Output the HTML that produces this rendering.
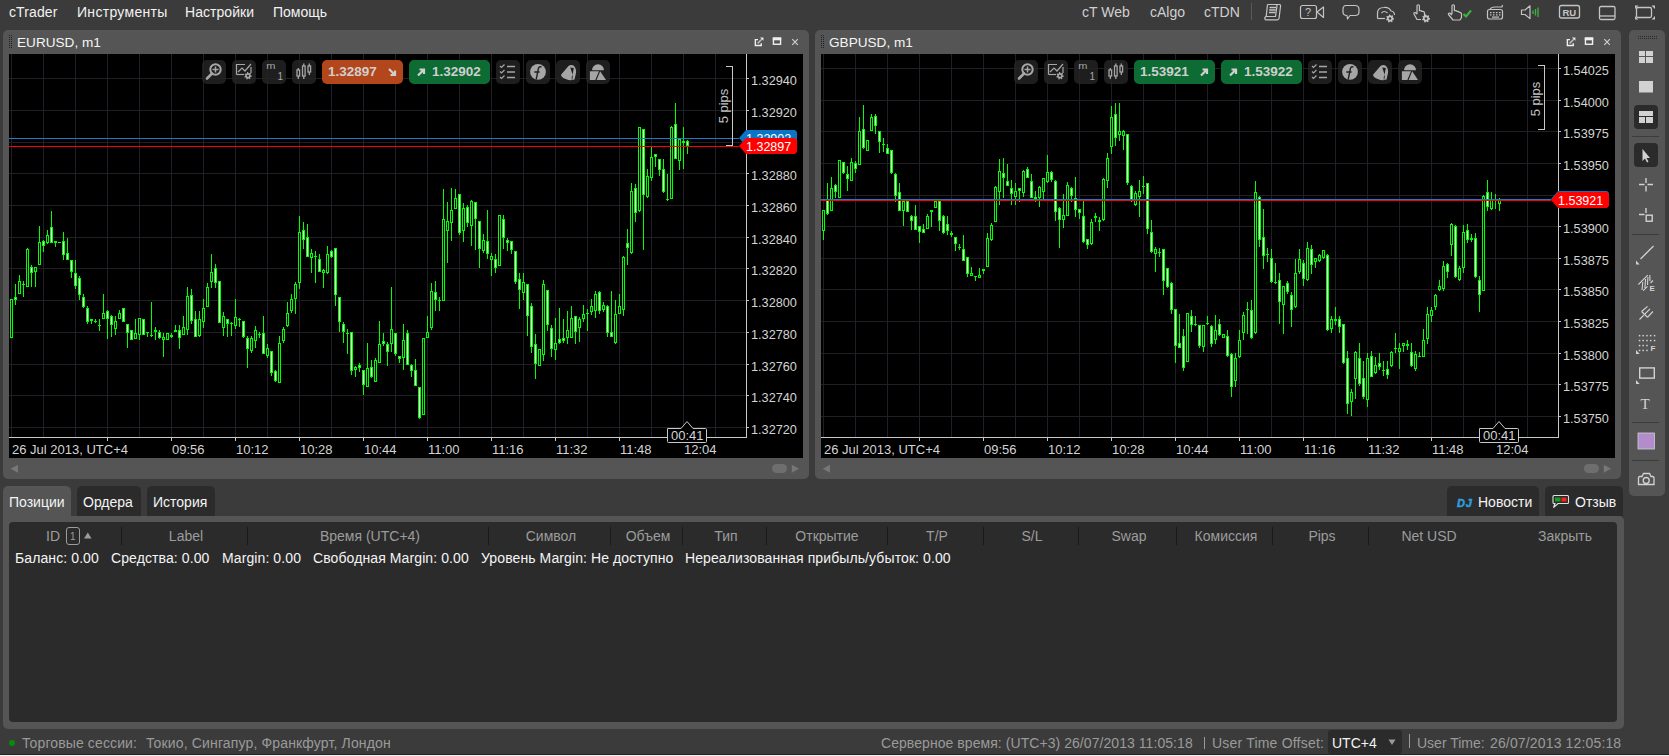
<!DOCTYPE html><html><head><meta charset="utf-8"><style>
*{margin:0;padding:0;box-sizing:border-box}
html,body{width:1669px;height:756px;overflow:hidden;background:#3b3b3b;font-family:"Liberation Sans",sans-serif}
.a{position:absolute}
.t{position:absolute;white-space:nowrap}
svg{position:absolute;overflow:visible}
</style></head><body>

<div class="a" style="left:0;top:754px;width:1669px;height:1px;background:#262626"></div>
<div class="a" style="left:0;top:755px;width:1669px;height:1px;background:#f0f0f0"></div>
<div class="t" style="left:9px;top:5.0px;font-size:14px;line-height:14px;color:#f2f2f2;letter-spacing:0.1px">cTrader</div>
<div class="t" style="left:77px;top:5.0px;font-size:14px;line-height:14px;color:#f2f2f2;letter-spacing:0.3px">Инструменты</div>
<div class="t" style="left:185px;top:5.0px;font-size:14px;line-height:14px;color:#f2f2f2;letter-spacing:0.05px">Настройки</div>
<div class="t" style="left:273px;top:5.0px;font-size:14px;line-height:14px;color:#f2f2f2;letter-spacing:0px">Помощь</div>
<div class="t" style="left:1082px;top:5.0px;font-size:14px;line-height:14px;color:#d0d0d0;">cT Web</div>
<div class="t" style="left:1150px;top:5.0px;font-size:14px;line-height:14px;color:#d0d0d0;">cAlgo</div>
<div class="t" style="left:1204px;top:5.0px;font-size:14px;line-height:14px;color:#d0d0d0;">cTDN</div>
<div class="a" style="left:1251px;top:3px;width:1px;height:17px;background:#5a5a5a"></div>
<div class="a" style="left:3px;top:30px;width:806px;height:449px;background:#555;border-radius:5px"></div>
<svg class="a" style="left:9px;top:35px" width="6" height="14"><rect x="0" y="0" width="1" height="1" fill="#222"/><rect x="0" y="2" width="1" height="1" fill="#222"/><rect x="0" y="4" width="1" height="1" fill="#222"/><rect x="0" y="6" width="1" height="1" fill="#222"/><rect x="0" y="8" width="1" height="1" fill="#222"/><rect x="0" y="10" width="1" height="1" fill="#222"/><rect x="0" y="12" width="1" height="1" fill="#222"/><rect x="2" y="0" width="1" height="1" fill="#222"/><rect x="2" y="2" width="1" height="1" fill="#222"/><rect x="2" y="4" width="1" height="1" fill="#222"/><rect x="2" y="6" width="1" height="1" fill="#222"/><rect x="2" y="8" width="1" height="1" fill="#222"/><rect x="2" y="10" width="1" height="1" fill="#222"/><rect x="2" y="12" width="1" height="1" fill="#222"/></svg>
<div class="t" style="left:17px;top:35.7px;font-size:13.6px;line-height:13.6px;color:#f4f4f4;">EURUSD, m1</div>
<svg class="a" style="left:750px;top:35px" width="56" height="14">
<g fill="none" stroke="#f0f0f0" stroke-width="1.4">
<path d="M8 4.65 H5.35 V10.45 H11.25 V8.2"/><rect x="23.45" y="3.15" width="7.1" height="6.1"/></g>
<path d="M7.6 8.4 L11.8 4.2" stroke="#bdbdbd" stroke-width="1.5"/>
<path d="M10 2.4 H13.4 V5.8 Z" fill="#f0f0f0"/>
<rect x="22.8" y="2.5" width="8.4" height="2.8" fill="#f0f0f0"/>
<path d="M42.3 4.2 L47.8 9.8 M47.8 4.2 L42.3 9.8" stroke="#cfcfcf" stroke-width="1.2"/>
</svg>
<div class="a" style="left:815px;top:30px;width:806px;height:449px;background:#555;border-radius:5px"></div>
<svg class="a" style="left:821px;top:35px" width="6" height="14"><rect x="0" y="0" width="1" height="1" fill="#222"/><rect x="0" y="2" width="1" height="1" fill="#222"/><rect x="0" y="4" width="1" height="1" fill="#222"/><rect x="0" y="6" width="1" height="1" fill="#222"/><rect x="0" y="8" width="1" height="1" fill="#222"/><rect x="0" y="10" width="1" height="1" fill="#222"/><rect x="0" y="12" width="1" height="1" fill="#222"/><rect x="2" y="0" width="1" height="1" fill="#222"/><rect x="2" y="2" width="1" height="1" fill="#222"/><rect x="2" y="4" width="1" height="1" fill="#222"/><rect x="2" y="6" width="1" height="1" fill="#222"/><rect x="2" y="8" width="1" height="1" fill="#222"/><rect x="2" y="10" width="1" height="1" fill="#222"/><rect x="2" y="12" width="1" height="1" fill="#222"/></svg>
<div class="t" style="left:829px;top:35.7px;font-size:13.6px;line-height:13.6px;color:#f4f4f4;">GBPUSD, m1</div>
<svg class="a" style="left:1562px;top:35px" width="56" height="14">
<g fill="none" stroke="#f0f0f0" stroke-width="1.4">
<path d="M8 4.65 H5.35 V10.45 H11.25 V8.2"/><rect x="23.45" y="3.15" width="7.1" height="6.1"/></g>
<path d="M7.6 8.4 L11.8 4.2" stroke="#bdbdbd" stroke-width="1.5"/>
<path d="M10 2.4 H13.4 V5.8 Z" fill="#f0f0f0"/>
<rect x="22.8" y="2.5" width="8.4" height="2.8" fill="#f0f0f0"/>
<path d="M42.3 4.2 L47.8 9.8 M47.8 4.2 L42.3 9.8" stroke="#cfcfcf" stroke-width="1.2"/>
</svg>
<div class="a" style="left:9px;top:54px;width:794px;height:404px;background:#000"></div>
<svg class="a" style="left:0;top:0" width="1669" height="756" shape-rendering="crispEdges"><rect x="11" y="54" width="1" height="383" fill="#201f25"/><rect x="43" y="54" width="1" height="383" fill="#201f25"/><rect x="75" y="54" width="1" height="383" fill="#201f25"/><rect x="107" y="54" width="1" height="383" fill="#201f25"/><rect x="139" y="54" width="1" height="383" fill="#201f25"/><rect x="171" y="54" width="1" height="383" fill="#201f25"/><rect x="203" y="54" width="1" height="383" fill="#201f25"/><rect x="235" y="54" width="1" height="383" fill="#201f25"/><rect x="267" y="54" width="1" height="383" fill="#201f25"/><rect x="299" y="54" width="1" height="383" fill="#201f25"/><rect x="331" y="54" width="1" height="383" fill="#201f25"/><rect x="363" y="54" width="1" height="383" fill="#201f25"/><rect x="395" y="54" width="1" height="383" fill="#201f25"/><rect x="427" y="54" width="1" height="383" fill="#201f25"/><rect x="459" y="54" width="1" height="383" fill="#201f25"/><rect x="491" y="54" width="1" height="383" fill="#201f25"/><rect x="523" y="54" width="1" height="383" fill="#201f25"/><rect x="555" y="54" width="1" height="383" fill="#201f25"/><rect x="587" y="54" width="1" height="383" fill="#201f25"/><rect x="619" y="54" width="1" height="383" fill="#201f25"/><rect x="651" y="54" width="1" height="383" fill="#201f25"/><rect x="683" y="54" width="1" height="383" fill="#201f25"/><rect x="715" y="54" width="1" height="383" fill="#201f25"/><rect x="9" y="78" width="737" height="1" fill="#201f25"/><rect x="9" y="110" width="737" height="1" fill="#201f25"/><rect x="9" y="142" width="737" height="1" fill="#201f25"/><rect x="9" y="173" width="737" height="1" fill="#201f25"/><rect x="9" y="205" width="737" height="1" fill="#201f25"/><rect x="9" y="237" width="737" height="1" fill="#201f25"/><rect x="9" y="268" width="737" height="1" fill="#201f25"/><rect x="9" y="300" width="737" height="1" fill="#201f25"/><rect x="9" y="332" width="737" height="1" fill="#201f25"/><rect x="9" y="364" width="737" height="1" fill="#201f25"/><rect x="9" y="395" width="737" height="1" fill="#201f25"/><rect x="9" y="427" width="737" height="1" fill="#201f25"/><rect x="746" y="54" width="1" height="384" fill="#c8c8c8"/><rect x="9" y="437" width="737" height="1" fill="#c8c8c8"/><rect x="746" y="78" width="3" height="1" fill="#c8c8c8"/><rect x="746" y="110" width="3" height="1" fill="#c8c8c8"/><rect x="746" y="142" width="3" height="1" fill="#c8c8c8"/><rect x="746" y="173" width="3" height="1" fill="#c8c8c8"/><rect x="746" y="205" width="3" height="1" fill="#c8c8c8"/><rect x="746" y="237" width="3" height="1" fill="#c8c8c8"/><rect x="746" y="268" width="3" height="1" fill="#c8c8c8"/><rect x="746" y="300" width="3" height="1" fill="#c8c8c8"/><rect x="746" y="332" width="3" height="1" fill="#c8c8c8"/><rect x="746" y="364" width="3" height="1" fill="#c8c8c8"/><rect x="746" y="395" width="3" height="1" fill="#c8c8c8"/><rect x="746" y="427" width="3" height="1" fill="#c8c8c8"/><rect x="107" y="437" width="1" height="4" fill="#c8c8c8"/><rect x="171" y="437" width="1" height="4" fill="#c8c8c8"/><rect x="235" y="437" width="1" height="4" fill="#c8c8c8"/><rect x="299" y="437" width="1" height="4" fill="#c8c8c8"/><rect x="363" y="437" width="1" height="4" fill="#c8c8c8"/><rect x="427" y="437" width="1" height="4" fill="#c8c8c8"/><rect x="491" y="437" width="1" height="4" fill="#c8c8c8"/><rect x="555" y="437" width="1" height="4" fill="#c8c8c8"/><rect x="619" y="437" width="1" height="4" fill="#c8c8c8"/><rect x="683" y="437" width="1" height="4" fill="#c8c8c8"/><rect x="11" y="299" width="1" height="39" fill="#00ff00"/>
<rect x="10" y="299" width="3" height="39" fill="#00ff00"/>
<rect x="11" y="300" width="1" height="37" fill="#000"/>
<rect x="15" y="284" width="1" height="21" fill="#00ff00"/>
<rect x="14" y="297" width="3" height="3" fill="#00ff00"/>
<rect x="15" y="298" width="1" height="1" fill="#e8ffe0"/>
<rect x="19" y="275" width="1" height="19" fill="#00ff00"/>
<rect x="18" y="281" width="3" height="13" fill="#00ff00"/>
<rect x="19" y="282" width="1" height="11" fill="#000"/>
<rect x="23" y="281" width="1" height="16" fill="#00ff00"/>
<rect x="22" y="284" width="3" height="1" fill="#00ff00"/>
<rect x="27" y="248" width="1" height="39" fill="#00ff00"/>
<rect x="26" y="249" width="3" height="38" fill="#00ff00"/>
<rect x="27" y="250" width="1" height="36" fill="#000"/>
<rect x="31" y="265" width="1" height="22" fill="#00ff00"/>
<rect x="30" y="267" width="3" height="6" fill="#00ff00"/>
<rect x="31" y="268" width="1" height="4" fill="#e8ffe0"/>
<rect x="35" y="267" width="1" height="20" fill="#00ff00"/>
<rect x="34" y="267" width="3" height="5" fill="#00ff00"/>
<rect x="35" y="268" width="1" height="3" fill="#000"/>
<rect x="39" y="226" width="1" height="39" fill="#00ff00"/>
<rect x="38" y="242" width="3" height="23" fill="#00ff00"/>
<rect x="39" y="243" width="1" height="21" fill="#000"/>
<rect x="43" y="240" width="1" height="12" fill="#00ff00"/>
<rect x="42" y="241" width="3" height="5" fill="#00ff00"/>
<rect x="43" y="242" width="1" height="3" fill="#e8ffe0"/>
<rect x="47" y="230" width="1" height="14" fill="#00ff00"/>
<rect x="46" y="235" width="3" height="8" fill="#00ff00"/>
<rect x="47" y="236" width="1" height="6" fill="#000"/>
<rect x="51" y="211" width="1" height="32" fill="#00ff00"/>
<rect x="50" y="227" width="3" height="16" fill="#00ff00"/>
<rect x="51" y="228" width="1" height="14" fill="#e8ffe0"/>
<rect x="55" y="241" width="1" height="6" fill="#00ff00"/>
<rect x="54" y="241" width="3" height="2" fill="#00ff00"/>
<rect x="59" y="242" width="1" height="1" fill="#00ff00"/>
<rect x="58" y="242" width="3" height="1" fill="#00ff00"/>
<rect x="63" y="232" width="1" height="28" fill="#00ff00"/>
<rect x="62" y="241" width="3" height="14" fill="#00ff00"/>
<rect x="63" y="242" width="1" height="12" fill="#e8ffe0"/>
<rect x="67" y="238" width="1" height="22" fill="#00ff00"/>
<rect x="66" y="253" width="3" height="7" fill="#00ff00"/>
<rect x="67" y="254" width="1" height="5" fill="#e8ffe0"/>
<rect x="71" y="260" width="1" height="18" fill="#00ff00"/>
<rect x="70" y="260" width="3" height="12" fill="#00ff00"/>
<rect x="71" y="261" width="1" height="10" fill="#e8ffe0"/>
<rect x="75" y="260" width="1" height="29" fill="#00ff00"/>
<rect x="74" y="273" width="3" height="13" fill="#00ff00"/>
<rect x="75" y="274" width="1" height="11" fill="#e8ffe0"/>
<rect x="79" y="276" width="1" height="24" fill="#00ff00"/>
<rect x="78" y="278" width="3" height="17" fill="#00ff00"/>
<rect x="79" y="279" width="1" height="15" fill="#e8ffe0"/>
<rect x="83" y="294" width="1" height="14" fill="#00ff00"/>
<rect x="82" y="297" width="3" height="10" fill="#00ff00"/>
<rect x="83" y="298" width="1" height="8" fill="#e8ffe0"/>
<rect x="87" y="306" width="1" height="18" fill="#00ff00"/>
<rect x="86" y="308" width="3" height="14" fill="#00ff00"/>
<rect x="87" y="309" width="1" height="12" fill="#e8ffe0"/>
<rect x="91" y="319" width="1" height="5" fill="#00ff00"/>
<rect x="90" y="319" width="3" height="2" fill="#00ff00"/>
<rect x="95" y="319" width="1" height="4" fill="#00ff00"/>
<rect x="94" y="321" width="3" height="1" fill="#00ff00"/>
<rect x="99" y="319" width="1" height="12" fill="#00ff00"/>
<rect x="98" y="325" width="3" height="1" fill="#00ff00"/>
<rect x="103" y="294" width="1" height="25" fill="#00ff00"/>
<rect x="102" y="313" width="3" height="6" fill="#00ff00"/>
<rect x="103" y="314" width="1" height="4" fill="#000"/>
<rect x="107" y="310" width="1" height="29" fill="#00ff00"/>
<rect x="106" y="311" width="3" height="8" fill="#00ff00"/>
<rect x="107" y="312" width="1" height="6" fill="#e8ffe0"/>
<rect x="111" y="315" width="1" height="22" fill="#00ff00"/>
<rect x="110" y="316" width="3" height="9" fill="#00ff00"/>
<rect x="111" y="317" width="1" height="7" fill="#e8ffe0"/>
<rect x="115" y="316" width="1" height="19" fill="#00ff00"/>
<rect x="114" y="321" width="3" height="8" fill="#00ff00"/>
<rect x="115" y="322" width="1" height="6" fill="#000"/>
<rect x="119" y="310" width="1" height="9" fill="#00ff00"/>
<rect x="118" y="313" width="3" height="6" fill="#00ff00"/>
<rect x="119" y="314" width="1" height="4" fill="#000"/>
<rect x="123" y="308" width="1" height="14" fill="#00ff00"/>
<rect x="122" y="308" width="3" height="14" fill="#00ff00"/>
<rect x="123" y="309" width="1" height="12" fill="#e8ffe0"/>
<rect x="127" y="324" width="1" height="24" fill="#00ff00"/>
<rect x="126" y="324" width="3" height="9" fill="#00ff00"/>
<rect x="127" y="325" width="1" height="7" fill="#e8ffe0"/>
<rect x="131" y="330" width="1" height="10" fill="#00ff00"/>
<rect x="130" y="330" width="3" height="10" fill="#00ff00"/>
<rect x="131" y="331" width="1" height="8" fill="#e8ffe0"/>
<rect x="135" y="319" width="1" height="20" fill="#00ff00"/>
<rect x="134" y="333" width="3" height="6" fill="#00ff00"/>
<rect x="135" y="334" width="1" height="4" fill="#000"/>
<rect x="139" y="318" width="1" height="22" fill="#00ff00"/>
<rect x="138" y="318" width="3" height="17" fill="#00ff00"/>
<rect x="139" y="319" width="1" height="15" fill="#000"/>
<rect x="143" y="319" width="1" height="16" fill="#00ff00"/>
<rect x="142" y="319" width="3" height="16" fill="#00ff00"/>
<rect x="143" y="320" width="1" height="14" fill="#e8ffe0"/>
<rect x="147" y="332" width="1" height="5" fill="#00ff00"/>
<rect x="146" y="332" width="3" height="1" fill="#00ff00"/>
<rect x="151" y="302" width="1" height="35" fill="#00ff00"/>
<rect x="150" y="335" width="3" height="1" fill="#00ff00"/>
<rect x="155" y="327" width="1" height="13" fill="#00ff00"/>
<rect x="154" y="330" width="3" height="2" fill="#00ff00"/>
<rect x="159" y="330" width="1" height="9" fill="#00ff00"/>
<rect x="158" y="332" width="3" height="6" fill="#00ff00"/>
<rect x="159" y="333" width="1" height="4" fill="#e8ffe0"/>
<rect x="163" y="333" width="1" height="24" fill="#00ff00"/>
<rect x="162" y="337" width="3" height="3" fill="#00ff00"/>
<rect x="163" y="338" width="1" height="1" fill="#000"/>
<rect x="167" y="333" width="1" height="7" fill="#00ff00"/>
<rect x="166" y="333" width="3" height="7" fill="#00ff00"/>
<rect x="167" y="334" width="1" height="5" fill="#000"/>
<rect x="171" y="333" width="1" height="5" fill="#00ff00"/>
<rect x="170" y="335" width="3" height="2" fill="#00ff00"/>
<rect x="175" y="325" width="1" height="7" fill="#00ff00"/>
<rect x="174" y="330" width="3" height="2" fill="#00ff00"/>
<rect x="179" y="325" width="1" height="24" fill="#00ff00"/>
<rect x="178" y="330" width="3" height="8" fill="#00ff00"/>
<rect x="179" y="331" width="1" height="6" fill="#e8ffe0"/>
<rect x="183" y="316" width="1" height="19" fill="#00ff00"/>
<rect x="182" y="327" width="3" height="8" fill="#00ff00"/>
<rect x="183" y="328" width="1" height="6" fill="#000"/>
<rect x="187" y="287" width="1" height="48" fill="#00ff00"/>
<rect x="186" y="296" width="3" height="34" fill="#00ff00"/>
<rect x="187" y="297" width="1" height="32" fill="#000"/>
<rect x="191" y="289" width="1" height="35" fill="#00ff00"/>
<rect x="190" y="295" width="3" height="26" fill="#00ff00"/>
<rect x="191" y="296" width="1" height="24" fill="#e8ffe0"/>
<rect x="195" y="311" width="1" height="26" fill="#00ff00"/>
<rect x="194" y="319" width="3" height="18" fill="#00ff00"/>
<rect x="195" y="320" width="1" height="16" fill="#e8ffe0"/>
<rect x="199" y="311" width="1" height="26" fill="#00ff00"/>
<rect x="198" y="319" width="3" height="17" fill="#00ff00"/>
<rect x="199" y="320" width="1" height="15" fill="#000"/>
<rect x="203" y="299" width="1" height="29" fill="#00ff00"/>
<rect x="202" y="308" width="3" height="14" fill="#00ff00"/>
<rect x="203" y="309" width="1" height="12" fill="#000"/>
<rect x="207" y="283" width="1" height="24" fill="#00ff00"/>
<rect x="206" y="287" width="3" height="20" fill="#00ff00"/>
<rect x="207" y="288" width="1" height="18" fill="#000"/>
<rect x="211" y="254" width="1" height="34" fill="#00ff00"/>
<rect x="210" y="272" width="3" height="10" fill="#00ff00"/>
<rect x="211" y="273" width="1" height="8" fill="#000"/>
<rect x="215" y="264" width="1" height="24" fill="#00ff00"/>
<rect x="214" y="268" width="3" height="15" fill="#00ff00"/>
<rect x="215" y="269" width="1" height="13" fill="#e8ffe0"/>
<rect x="219" y="281" width="1" height="42" fill="#00ff00"/>
<rect x="218" y="281" width="3" height="42" fill="#00ff00"/>
<rect x="219" y="282" width="1" height="40" fill="#e8ffe0"/>
<rect x="223" y="312" width="1" height="24" fill="#00ff00"/>
<rect x="222" y="316" width="3" height="12" fill="#00ff00"/>
<rect x="223" y="317" width="1" height="10" fill="#000"/>
<rect x="227" y="319" width="1" height="18" fill="#00ff00"/>
<rect x="226" y="319" width="3" height="5" fill="#00ff00"/>
<rect x="227" y="320" width="1" height="3" fill="#e8ffe0"/>
<rect x="231" y="322" width="1" height="14" fill="#00ff00"/>
<rect x="230" y="323" width="3" height="1" fill="#00ff00"/>
<rect x="235" y="299" width="1" height="30" fill="#00ff00"/>
<rect x="234" y="317" width="3" height="9" fill="#00ff00"/>
<rect x="235" y="318" width="1" height="7" fill="#000"/>
<rect x="239" y="318" width="1" height="9" fill="#00ff00"/>
<rect x="238" y="319" width="3" height="1" fill="#00ff00"/>
<rect x="243" y="321" width="1" height="17" fill="#00ff00"/>
<rect x="242" y="321" width="3" height="16" fill="#00ff00"/>
<rect x="243" y="322" width="1" height="14" fill="#e8ffe0"/>
<rect x="247" y="336" width="1" height="32" fill="#00ff00"/>
<rect x="246" y="338" width="3" height="11" fill="#00ff00"/>
<rect x="247" y="339" width="1" height="9" fill="#e8ffe0"/>
<rect x="251" y="336" width="1" height="17" fill="#00ff00"/>
<rect x="250" y="338" width="3" height="13" fill="#00ff00"/>
<rect x="251" y="339" width="1" height="11" fill="#000"/>
<rect x="255" y="326" width="1" height="22" fill="#00ff00"/>
<rect x="254" y="330" width="3" height="11" fill="#00ff00"/>
<rect x="255" y="331" width="1" height="9" fill="#000"/>
<rect x="259" y="332" width="1" height="6" fill="#00ff00"/>
<rect x="258" y="334" width="3" height="1" fill="#00ff00"/>
<rect x="263" y="316" width="1" height="38" fill="#00ff00"/>
<rect x="262" y="333" width="3" height="21" fill="#00ff00"/>
<rect x="263" y="334" width="1" height="19" fill="#e8ffe0"/>
<rect x="267" y="344" width="1" height="14" fill="#00ff00"/>
<rect x="266" y="348" width="3" height="8" fill="#00ff00"/>
<rect x="267" y="349" width="1" height="6" fill="#000"/>
<rect x="271" y="351" width="1" height="25" fill="#00ff00"/>
<rect x="270" y="351" width="3" height="22" fill="#00ff00"/>
<rect x="271" y="352" width="1" height="20" fill="#e8ffe0"/>
<rect x="275" y="370" width="1" height="12" fill="#00ff00"/>
<rect x="274" y="371" width="3" height="10" fill="#00ff00"/>
<rect x="275" y="372" width="1" height="8" fill="#e8ffe0"/>
<rect x="279" y="336" width="1" height="47" fill="#00ff00"/>
<rect x="278" y="343" width="3" height="40" fill="#00ff00"/>
<rect x="279" y="344" width="1" height="38" fill="#000"/>
<rect x="283" y="327" width="1" height="16" fill="#00ff00"/>
<rect x="282" y="329" width="3" height="12" fill="#00ff00"/>
<rect x="283" y="330" width="1" height="10" fill="#000"/>
<rect x="287" y="302" width="1" height="25" fill="#00ff00"/>
<rect x="286" y="313" width="3" height="13" fill="#00ff00"/>
<rect x="287" y="314" width="1" height="11" fill="#000"/>
<rect x="291" y="294" width="1" height="19" fill="#00ff00"/>
<rect x="290" y="299" width="3" height="12" fill="#00ff00"/>
<rect x="291" y="300" width="1" height="10" fill="#000"/>
<rect x="295" y="282" width="1" height="32" fill="#00ff00"/>
<rect x="294" y="284" width="3" height="15" fill="#00ff00"/>
<rect x="295" y="285" width="1" height="13" fill="#000"/>
<rect x="299" y="216" width="1" height="73" fill="#00ff00"/>
<rect x="298" y="232" width="3" height="51" fill="#00ff00"/>
<rect x="299" y="233" width="1" height="49" fill="#000"/>
<rect x="303" y="222" width="1" height="27" fill="#00ff00"/>
<rect x="302" y="230" width="3" height="10" fill="#00ff00"/>
<rect x="303" y="231" width="1" height="8" fill="#e8ffe0"/>
<rect x="307" y="224" width="1" height="33" fill="#00ff00"/>
<rect x="306" y="237" width="3" height="20" fill="#00ff00"/>
<rect x="307" y="238" width="1" height="18" fill="#e8ffe0"/>
<rect x="311" y="249" width="1" height="24" fill="#00ff00"/>
<rect x="310" y="253" width="3" height="5" fill="#00ff00"/>
<rect x="311" y="254" width="1" height="3" fill="#000"/>
<rect x="315" y="251" width="1" height="32" fill="#00ff00"/>
<rect x="314" y="256" width="3" height="1" fill="#00ff00"/>
<rect x="319" y="254" width="1" height="18" fill="#00ff00"/>
<rect x="318" y="259" width="3" height="13" fill="#00ff00"/>
<rect x="319" y="260" width="1" height="11" fill="#e8ffe0"/>
<rect x="323" y="269" width="1" height="19" fill="#00ff00"/>
<rect x="322" y="270" width="3" height="3" fill="#00ff00"/>
<rect x="323" y="271" width="1" height="1" fill="#000"/>
<rect x="327" y="246" width="1" height="28" fill="#00ff00"/>
<rect x="326" y="254" width="3" height="19" fill="#00ff00"/>
<rect x="327" y="255" width="1" height="17" fill="#000"/>
<rect x="331" y="250" width="1" height="8" fill="#00ff00"/>
<rect x="330" y="251" width="3" height="6" fill="#00ff00"/>
<rect x="331" y="252" width="1" height="4" fill="#e8ffe0"/>
<rect x="335" y="248" width="1" height="58" fill="#00ff00"/>
<rect x="334" y="248" width="3" height="47" fill="#00ff00"/>
<rect x="335" y="249" width="1" height="45" fill="#e8ffe0"/>
<rect x="339" y="297" width="1" height="35" fill="#00ff00"/>
<rect x="338" y="297" width="3" height="25" fill="#00ff00"/>
<rect x="339" y="298" width="1" height="23" fill="#e8ffe0"/>
<rect x="343" y="322" width="1" height="21" fill="#00ff00"/>
<rect x="342" y="324" width="3" height="8" fill="#00ff00"/>
<rect x="343" y="325" width="1" height="6" fill="#e8ffe0"/>
<rect x="347" y="329" width="1" height="25" fill="#00ff00"/>
<rect x="346" y="333" width="3" height="1" fill="#00ff00"/>
<rect x="351" y="332" width="1" height="43" fill="#00ff00"/>
<rect x="350" y="332" width="3" height="39" fill="#00ff00"/>
<rect x="351" y="333" width="1" height="37" fill="#e8ffe0"/>
<rect x="355" y="366" width="1" height="11" fill="#00ff00"/>
<rect x="354" y="367" width="3" height="3" fill="#00ff00"/>
<rect x="355" y="368" width="1" height="1" fill="#000"/>
<rect x="359" y="363" width="1" height="9" fill="#00ff00"/>
<rect x="358" y="365" width="3" height="3" fill="#00ff00"/>
<rect x="359" y="366" width="1" height="1" fill="#e8ffe0"/>
<rect x="363" y="370" width="1" height="25" fill="#00ff00"/>
<rect x="362" y="370" width="3" height="15" fill="#00ff00"/>
<rect x="363" y="371" width="1" height="13" fill="#e8ffe0"/>
<rect x="367" y="343" width="1" height="44" fill="#00ff00"/>
<rect x="366" y="368" width="3" height="19" fill="#00ff00"/>
<rect x="367" y="369" width="1" height="17" fill="#000"/>
<rect x="371" y="360" width="1" height="18" fill="#00ff00"/>
<rect x="370" y="367" width="3" height="10" fill="#00ff00"/>
<rect x="371" y="368" width="1" height="8" fill="#e8ffe0"/>
<rect x="375" y="358" width="1" height="24" fill="#00ff00"/>
<rect x="374" y="360" width="3" height="22" fill="#00ff00"/>
<rect x="375" y="361" width="1" height="20" fill="#000"/>
<rect x="379" y="321" width="1" height="42" fill="#00ff00"/>
<rect x="378" y="344" width="3" height="19" fill="#00ff00"/>
<rect x="379" y="345" width="1" height="17" fill="#000"/>
<rect x="383" y="333" width="1" height="13" fill="#00ff00"/>
<rect x="382" y="341" width="3" height="3" fill="#00ff00"/>
<rect x="383" y="342" width="1" height="1" fill="#e8ffe0"/>
<rect x="387" y="342" width="1" height="24" fill="#00ff00"/>
<rect x="386" y="344" width="3" height="8" fill="#00ff00"/>
<rect x="387" y="345" width="1" height="6" fill="#e8ffe0"/>
<rect x="391" y="287" width="1" height="65" fill="#00ff00"/>
<rect x="390" y="329" width="3" height="15" fill="#00ff00"/>
<rect x="391" y="330" width="1" height="13" fill="#000"/>
<rect x="395" y="333" width="1" height="23" fill="#00ff00"/>
<rect x="394" y="333" width="3" height="21" fill="#00ff00"/>
<rect x="395" y="334" width="1" height="19" fill="#e8ffe0"/>
<rect x="399" y="356" width="1" height="7" fill="#00ff00"/>
<rect x="398" y="356" width="3" height="3" fill="#00ff00"/>
<rect x="399" y="357" width="1" height="1" fill="#e8ffe0"/>
<rect x="403" y="324" width="1" height="46" fill="#00ff00"/>
<rect x="402" y="340" width="3" height="18" fill="#00ff00"/>
<rect x="403" y="341" width="1" height="16" fill="#000"/>
<rect x="407" y="330" width="1" height="35" fill="#00ff00"/>
<rect x="406" y="333" width="3" height="32" fill="#00ff00"/>
<rect x="407" y="334" width="1" height="30" fill="#e8ffe0"/>
<rect x="411" y="364" width="1" height="13" fill="#00ff00"/>
<rect x="410" y="365" width="3" height="6" fill="#00ff00"/>
<rect x="411" y="366" width="1" height="4" fill="#e8ffe0"/>
<rect x="415" y="359" width="1" height="27" fill="#00ff00"/>
<rect x="414" y="370" width="3" height="16" fill="#00ff00"/>
<rect x="415" y="371" width="1" height="14" fill="#e8ffe0"/>
<rect x="419" y="387" width="1" height="32" fill="#00ff00"/>
<rect x="418" y="387" width="3" height="31" fill="#00ff00"/>
<rect x="419" y="388" width="1" height="29" fill="#e8ffe0"/>
<rect x="423" y="338" width="1" height="77" fill="#00ff00"/>
<rect x="422" y="338" width="3" height="77" fill="#00ff00"/>
<rect x="423" y="339" width="1" height="75" fill="#000"/>
<rect x="427" y="316" width="1" height="22" fill="#00ff00"/>
<rect x="426" y="332" width="3" height="6" fill="#00ff00"/>
<rect x="427" y="333" width="1" height="4" fill="#000"/>
<rect x="431" y="283" width="1" height="47" fill="#00ff00"/>
<rect x="430" y="291" width="3" height="37" fill="#00ff00"/>
<rect x="431" y="292" width="1" height="35" fill="#000"/>
<rect x="435" y="281" width="1" height="30" fill="#00ff00"/>
<rect x="434" y="292" width="3" height="8" fill="#00ff00"/>
<rect x="435" y="293" width="1" height="6" fill="#e8ffe0"/>
<rect x="439" y="297" width="1" height="14" fill="#00ff00"/>
<rect x="438" y="300" width="3" height="1" fill="#00ff00"/>
<rect x="443" y="189" width="1" height="112" fill="#00ff00"/>
<rect x="442" y="219" width="3" height="82" fill="#00ff00"/>
<rect x="443" y="220" width="1" height="80" fill="#000"/>
<rect x="447" y="202" width="1" height="61" fill="#00ff00"/>
<rect x="446" y="221" width="3" height="10" fill="#00ff00"/>
<rect x="447" y="222" width="1" height="8" fill="#000"/>
<rect x="451" y="188" width="1" height="53" fill="#00ff00"/>
<rect x="450" y="210" width="3" height="13" fill="#00ff00"/>
<rect x="451" y="211" width="1" height="11" fill="#000"/>
<rect x="455" y="189" width="1" height="20" fill="#00ff00"/>
<rect x="454" y="198" width="3" height="11" fill="#00ff00"/>
<rect x="455" y="199" width="1" height="9" fill="#000"/>
<rect x="459" y="194" width="1" height="41" fill="#00ff00"/>
<rect x="458" y="194" width="3" height="39" fill="#00ff00"/>
<rect x="459" y="195" width="1" height="37" fill="#e8ffe0"/>
<rect x="463" y="203" width="1" height="39" fill="#00ff00"/>
<rect x="462" y="208" width="3" height="23" fill="#00ff00"/>
<rect x="463" y="209" width="1" height="21" fill="#000"/>
<rect x="467" y="205" width="1" height="22" fill="#00ff00"/>
<rect x="466" y="207" width="3" height="16" fill="#00ff00"/>
<rect x="467" y="208" width="1" height="14" fill="#e8ffe0"/>
<rect x="471" y="200" width="1" height="46" fill="#00ff00"/>
<rect x="470" y="201" width="3" height="25" fill="#00ff00"/>
<rect x="471" y="202" width="1" height="23" fill="#000"/>
<rect x="475" y="202" width="1" height="48" fill="#00ff00"/>
<rect x="474" y="202" width="3" height="17" fill="#00ff00"/>
<rect x="475" y="203" width="1" height="15" fill="#e8ffe0"/>
<rect x="479" y="221" width="1" height="47" fill="#00ff00"/>
<rect x="478" y="221" width="3" height="28" fill="#00ff00"/>
<rect x="479" y="222" width="1" height="26" fill="#e8ffe0"/>
<rect x="483" y="234" width="1" height="19" fill="#00ff00"/>
<rect x="482" y="240" width="3" height="11" fill="#00ff00"/>
<rect x="483" y="241" width="1" height="9" fill="#000"/>
<rect x="487" y="210" width="1" height="49" fill="#00ff00"/>
<rect x="486" y="241" width="3" height="13" fill="#00ff00"/>
<rect x="487" y="242" width="1" height="11" fill="#e8ffe0"/>
<rect x="491" y="253" width="1" height="23" fill="#00ff00"/>
<rect x="490" y="256" width="3" height="4" fill="#00ff00"/>
<rect x="491" y="257" width="1" height="2" fill="#000"/>
<rect x="495" y="254" width="1" height="19" fill="#00ff00"/>
<rect x="494" y="259" width="3" height="9" fill="#00ff00"/>
<rect x="495" y="260" width="1" height="7" fill="#e8ffe0"/>
<rect x="499" y="215" width="1" height="51" fill="#00ff00"/>
<rect x="498" y="215" width="3" height="51" fill="#00ff00"/>
<rect x="499" y="216" width="1" height="49" fill="#000"/>
<rect x="503" y="215" width="1" height="34" fill="#00ff00"/>
<rect x="502" y="219" width="3" height="19" fill="#00ff00"/>
<rect x="503" y="220" width="1" height="17" fill="#e8ffe0"/>
<rect x="507" y="238" width="1" height="13" fill="#00ff00"/>
<rect x="506" y="240" width="3" height="3" fill="#00ff00"/>
<rect x="507" y="241" width="1" height="1" fill="#e8ffe0"/>
<rect x="511" y="241" width="1" height="13" fill="#00ff00"/>
<rect x="510" y="241" width="3" height="9" fill="#00ff00"/>
<rect x="511" y="242" width="1" height="7" fill="#e8ffe0"/>
<rect x="515" y="251" width="1" height="33" fill="#00ff00"/>
<rect x="514" y="251" width="3" height="31" fill="#00ff00"/>
<rect x="515" y="252" width="1" height="29" fill="#e8ffe0"/>
<rect x="519" y="273" width="1" height="36" fill="#00ff00"/>
<rect x="518" y="279" width="3" height="11" fill="#00ff00"/>
<rect x="519" y="280" width="1" height="9" fill="#e8ffe0"/>
<rect x="523" y="273" width="1" height="27" fill="#00ff00"/>
<rect x="522" y="282" width="3" height="11" fill="#00ff00"/>
<rect x="523" y="283" width="1" height="9" fill="#000"/>
<rect x="527" y="284" width="1" height="52" fill="#00ff00"/>
<rect x="526" y="284" width="3" height="32" fill="#00ff00"/>
<rect x="527" y="285" width="1" height="30" fill="#e8ffe0"/>
<rect x="531" y="303" width="1" height="50" fill="#00ff00"/>
<rect x="530" y="306" width="3" height="41" fill="#00ff00"/>
<rect x="531" y="307" width="1" height="39" fill="#e8ffe0"/>
<rect x="535" y="334" width="1" height="45" fill="#00ff00"/>
<rect x="534" y="344" width="3" height="20" fill="#00ff00"/>
<rect x="535" y="345" width="1" height="18" fill="#e8ffe0"/>
<rect x="539" y="349" width="1" height="17" fill="#00ff00"/>
<rect x="538" y="349" width="3" height="17" fill="#00ff00"/>
<rect x="539" y="350" width="1" height="15" fill="#000"/>
<rect x="543" y="280" width="1" height="81" fill="#00ff00"/>
<rect x="542" y="284" width="3" height="71" fill="#00ff00"/>
<rect x="543" y="285" width="1" height="69" fill="#000"/>
<rect x="547" y="290" width="1" height="41" fill="#00ff00"/>
<rect x="546" y="290" width="3" height="35" fill="#00ff00"/>
<rect x="547" y="291" width="1" height="33" fill="#e8ffe0"/>
<rect x="551" y="325" width="1" height="32" fill="#00ff00"/>
<rect x="550" y="328" width="3" height="21" fill="#00ff00"/>
<rect x="551" y="329" width="1" height="19" fill="#e8ffe0"/>
<rect x="555" y="318" width="1" height="42" fill="#00ff00"/>
<rect x="554" y="343" width="3" height="7" fill="#00ff00"/>
<rect x="555" y="344" width="1" height="5" fill="#000"/>
<rect x="559" y="308" width="1" height="36" fill="#00ff00"/>
<rect x="558" y="339" width="3" height="4" fill="#00ff00"/>
<rect x="559" y="340" width="1" height="2" fill="#e8ffe0"/>
<rect x="563" y="319" width="1" height="24" fill="#00ff00"/>
<rect x="562" y="338" width="3" height="3" fill="#00ff00"/>
<rect x="563" y="339" width="1" height="1" fill="#e8ffe0"/>
<rect x="567" y="311" width="1" height="33" fill="#00ff00"/>
<rect x="566" y="330" width="3" height="8" fill="#00ff00"/>
<rect x="567" y="331" width="1" height="6" fill="#000"/>
<rect x="571" y="306" width="1" height="32" fill="#00ff00"/>
<rect x="570" y="318" width="3" height="20" fill="#00ff00"/>
<rect x="571" y="319" width="1" height="18" fill="#000"/>
<rect x="575" y="316" width="1" height="28" fill="#00ff00"/>
<rect x="574" y="316" width="3" height="16" fill="#00ff00"/>
<rect x="575" y="317" width="1" height="14" fill="#e8ffe0"/>
<rect x="579" y="317" width="1" height="25" fill="#00ff00"/>
<rect x="578" y="319" width="3" height="9" fill="#00ff00"/>
<rect x="579" y="320" width="1" height="7" fill="#000"/>
<rect x="583" y="305" width="1" height="17" fill="#00ff00"/>
<rect x="582" y="314" width="3" height="5" fill="#00ff00"/>
<rect x="583" y="315" width="1" height="3" fill="#000"/>
<rect x="587" y="309" width="1" height="22" fill="#00ff00"/>
<rect x="586" y="313" width="3" height="1" fill="#00ff00"/>
<rect x="591" y="299" width="1" height="16" fill="#00ff00"/>
<rect x="590" y="306" width="3" height="6" fill="#00ff00"/>
<rect x="591" y="307" width="1" height="4" fill="#000"/>
<rect x="595" y="291" width="1" height="27" fill="#00ff00"/>
<rect x="594" y="294" width="3" height="17" fill="#00ff00"/>
<rect x="595" y="295" width="1" height="15" fill="#000"/>
<rect x="599" y="291" width="1" height="23" fill="#00ff00"/>
<rect x="598" y="292" width="3" height="19" fill="#00ff00"/>
<rect x="599" y="293" width="1" height="17" fill="#e8ffe0"/>
<rect x="603" y="302" width="1" height="10" fill="#00ff00"/>
<rect x="602" y="305" width="3" height="5" fill="#00ff00"/>
<rect x="603" y="306" width="1" height="3" fill="#000"/>
<rect x="607" y="305" width="1" height="32" fill="#00ff00"/>
<rect x="606" y="306" width="3" height="27" fill="#00ff00"/>
<rect x="607" y="307" width="1" height="25" fill="#e8ffe0"/>
<rect x="611" y="291" width="1" height="46" fill="#00ff00"/>
<rect x="610" y="332" width="3" height="5" fill="#00ff00"/>
<rect x="611" y="333" width="1" height="3" fill="#e8ffe0"/>
<rect x="615" y="300" width="1" height="44" fill="#00ff00"/>
<rect x="614" y="314" width="3" height="29" fill="#00ff00"/>
<rect x="615" y="315" width="1" height="27" fill="#000"/>
<rect x="619" y="294" width="1" height="20" fill="#00ff00"/>
<rect x="618" y="306" width="3" height="8" fill="#00ff00"/>
<rect x="619" y="307" width="1" height="6" fill="#000"/>
<rect x="623" y="256" width="1" height="60" fill="#00ff00"/>
<rect x="622" y="257" width="3" height="53" fill="#00ff00"/>
<rect x="623" y="258" width="1" height="51" fill="#000"/>
<rect x="627" y="229" width="1" height="36" fill="#00ff00"/>
<rect x="626" y="243" width="3" height="5" fill="#00ff00"/>
<rect x="627" y="244" width="1" height="3" fill="#e8ffe0"/>
<rect x="631" y="183" width="1" height="71" fill="#00ff00"/>
<rect x="630" y="191" width="3" height="62" fill="#00ff00"/>
<rect x="631" y="192" width="1" height="60" fill="#000"/>
<rect x="635" y="184" width="1" height="38" fill="#00ff00"/>
<rect x="634" y="188" width="3" height="25" fill="#00ff00"/>
<rect x="635" y="189" width="1" height="23" fill="#e8ffe0"/>
<rect x="639" y="127" width="1" height="85" fill="#00ff00"/>
<rect x="638" y="127" width="3" height="84" fill="#00ff00"/>
<rect x="639" y="128" width="1" height="82" fill="#000"/>
<rect x="643" y="129" width="1" height="121" fill="#00ff00"/>
<rect x="642" y="129" width="3" height="66" fill="#00ff00"/>
<rect x="643" y="130" width="1" height="64" fill="#e8ffe0"/>
<rect x="647" y="169" width="1" height="29" fill="#00ff00"/>
<rect x="646" y="176" width="3" height="21" fill="#00ff00"/>
<rect x="647" y="177" width="1" height="19" fill="#000"/>
<rect x="651" y="147" width="1" height="34" fill="#00ff00"/>
<rect x="650" y="157" width="3" height="21" fill="#00ff00"/>
<rect x="651" y="158" width="1" height="19" fill="#000"/>
<rect x="655" y="154" width="1" height="13" fill="#00ff00"/>
<rect x="654" y="154" width="3" height="3" fill="#00ff00"/>
<rect x="655" y="155" width="1" height="1" fill="#e8ffe0"/>
<rect x="659" y="159" width="1" height="17" fill="#00ff00"/>
<rect x="658" y="159" width="3" height="11" fill="#00ff00"/>
<rect x="659" y="160" width="1" height="9" fill="#e8ffe0"/>
<rect x="663" y="159" width="1" height="34" fill="#00ff00"/>
<rect x="662" y="169" width="3" height="23" fill="#00ff00"/>
<rect x="663" y="170" width="1" height="21" fill="#e8ffe0"/>
<rect x="667" y="174" width="1" height="27" fill="#00ff00"/>
<rect x="666" y="199" width="3" height="1" fill="#00ff00"/>
<rect x="671" y="126" width="1" height="73" fill="#00ff00"/>
<rect x="670" y="127" width="3" height="72" fill="#00ff00"/>
<rect x="671" y="128" width="1" height="70" fill="#000"/>
<rect x="675" y="103" width="1" height="56" fill="#00ff00"/>
<rect x="674" y="124" width="3" height="35" fill="#00ff00"/>
<rect x="675" y="125" width="1" height="33" fill="#e8ffe0"/>
<rect x="679" y="139" width="1" height="31" fill="#00ff00"/>
<rect x="678" y="139" width="3" height="22" fill="#00ff00"/>
<rect x="679" y="140" width="1" height="20" fill="#000"/>
<rect x="683" y="127" width="1" height="42" fill="#00ff00"/>
<rect x="682" y="141" width="3" height="2" fill="#00ff00"/>
<rect x="687" y="140" width="1" height="14" fill="#00ff00"/>
<rect x="686" y="141" width="3" height="5" fill="#00ff00"/>
<rect x="687" y="142" width="1" height="3" fill="#e8ffe0"/><rect x="9" y="138" width="730" height="1" fill="#1f7acc"/><rect x="9" y="146" width="730" height="1" fill="#ff0000"/><rect x="732" y="66" width="1" height="80" fill="#c8c8c8"/><rect x="726" y="66" width="6" height="1" fill="#c8c8c8"/><rect x="726" y="145" width="6" height="1" fill="#c8c8c8"/></svg>
<div class="t" style="left:751px;top:74.65px;font-size:12.7px;line-height:12.7px;color:#d4d4d4;">1.32940</div>
<div class="t" style="left:751px;top:106.65px;font-size:12.7px;line-height:12.7px;color:#d4d4d4;">1.32920</div>
<div class="t" style="left:751px;top:138.65px;font-size:12.7px;line-height:12.7px;color:#d4d4d4;">1.32900</div>
<div class="t" style="left:751px;top:169.65px;font-size:12.7px;line-height:12.7px;color:#d4d4d4;">1.32880</div>
<div class="t" style="left:751px;top:201.65px;font-size:12.7px;line-height:12.7px;color:#d4d4d4;">1.32860</div>
<div class="t" style="left:751px;top:233.65px;font-size:12.7px;line-height:12.7px;color:#d4d4d4;">1.32840</div>
<div class="t" style="left:751px;top:264.65px;font-size:12.7px;line-height:12.7px;color:#d4d4d4;">1.32820</div>
<div class="t" style="left:751px;top:296.65px;font-size:12.7px;line-height:12.7px;color:#d4d4d4;">1.32800</div>
<div class="t" style="left:751px;top:328.65px;font-size:12.7px;line-height:12.7px;color:#d4d4d4;">1.32780</div>
<div class="t" style="left:751px;top:360.65px;font-size:12.7px;line-height:12.7px;color:#d4d4d4;">1.32760</div>
<div class="t" style="left:751px;top:391.65px;font-size:12.7px;line-height:12.7px;color:#d4d4d4;">1.32740</div>
<div class="t" style="left:751px;top:423.65px;font-size:12.7px;line-height:12.7px;color:#d4d4d4;">1.32720</div>
<div class="t" style="left:12px;top:443.0px;font-size:13px;line-height:13px;color:#d4d4d4;">26 Jul 2013, UTC+4</div>
<div class="t" style="left:172px;top:443.0px;font-size:13px;line-height:13px;color:#d4d4d4;">09:56</div>
<div class="t" style="left:236px;top:443.0px;font-size:13px;line-height:13px;color:#d4d4d4;">10:12</div>
<div class="t" style="left:300px;top:443.0px;font-size:13px;line-height:13px;color:#d4d4d4;">10:28</div>
<div class="t" style="left:364px;top:443.0px;font-size:13px;line-height:13px;color:#d4d4d4;">10:44</div>
<div class="t" style="left:428px;top:443.0px;font-size:13px;line-height:13px;color:#d4d4d4;">11:00</div>
<div class="t" style="left:492px;top:443.0px;font-size:13px;line-height:13px;color:#d4d4d4;">11:16</div>
<div class="t" style="left:556px;top:443.0px;font-size:13px;line-height:13px;color:#d4d4d4;">11:32</div>
<div class="t" style="left:620px;top:443.0px;font-size:13px;line-height:13px;color:#d4d4d4;">11:48</div>
<div class="t" style="left:684px;top:443.0px;font-size:13px;line-height:13px;color:#d4d4d4;">12:04</div>
<div class="t" style="left:694px;top:99px;width:60px;height:14px;text-align:center;font-size:13px;line-height:14px;color:#c4c4c4;transform:rotate(-90deg)">5 pips</div>
<svg class="a" style="left:0;top:0" width="1669" height="756"><polygon points="739,138 746,130 795,130 797,132 797,144 795,146 746,146" fill="#0a74c6"/></svg><div class="t" style="left:746px;top:133.25px;font-size:12.5px;line-height:12.5px;color:#ffffff;">1.32902</div>
<svg class="a" style="left:0;top:0" width="1669" height="756"><polygon points="739,146 746,138 795,138 797,140 797,152 795,154 746,154" fill="#ff0000"/></svg><div class="t" style="left:746px;top:141.25px;font-size:12.5px;line-height:12.5px;color:#ffffff;">1.32897</div>
<svg class="a" style="left:0;top:0" width="1669" height="756"><path d="M667.5 428.5 H681 L687 421.5 L693 428.5 H705.5 Q706.5 428.5 706.5 429.5 V441.5 Q706.5 442.5 705.5 442.5 H668.5 Q667.5 442.5 667.5 441.5 Z" fill="#000" stroke="#c8c8c8" stroke-width="1"/></svg>
<div class="t" style="left:671px;top:429.0px;font-size:13px;line-height:13px;color:#d4d4d4;">00:41</div>
<svg class="a" style="left:0px;top:460px" width="809" height="18"><path d="M10.5 8.8 L18 4.8 V12.8 Z" fill="#777"/><rect x="772" y="4" width="15" height="9" rx="4.5" fill="#6e6e6e"/><path d="M799 8.8 L791.8 4.8 V12.8 Z" fill="#777"/></svg>
<div class="a" style="left:202px;top:60px;width:24px;height:24px;border-radius:5px;background:rgba(36,36,36,0.82)"><svg width="24" height="24" style="left:0;top:0"><g fill="none" stroke="#a6a6a6" stroke-width="2"><circle cx="13.5" cy="9.5" r="5.2"/><path d="M10 13.5 L5 18.5" stroke-width="2.6" stroke-linecap="round"/></g><path d="M13.5 6.5 v6 M10.5 9.5 h6" stroke="#a6a6a6" stroke-width="1.5"/></svg></div>
<div class="a" style="left:232px;top:60px;width:24px;height:24px;border-radius:5px;background:rgba(36,36,36,0.82)"><svg width="24" height="24" style="left:0;top:0"><g fill="none" stroke="#a6a6a6" stroke-width="1.2"><path d="M4.5 14.5 V4.5 H13"/><path d="M4.5 14.5 H12"/><path d="M6 12 L10 8 L13 11 L19 4"/><path d="M19 7 v6"/></g><polygon points="19.80,15.80 19.70,16.65 18.43,16.97 18.11,17.48 18.37,18.77 17.65,19.22 16.60,18.43 16.00,18.50 15.15,19.50 14.35,19.22 14.32,17.91 13.89,17.48 12.58,17.45 12.30,16.65 13.30,15.80 13.37,15.20 12.58,14.15 13.03,13.43 14.32,13.69 14.83,13.37 15.15,12.10 16.00,12.00 16.60,13.17 17.17,13.37 18.37,12.83 18.97,13.43 18.43,14.63 18.63,15.20" fill="#a6a6a6"/><circle cx="16" cy="15.8" r="1.1" fill="#262626"/></svg></div>
<div class="a" style="left:262px;top:60px;width:24px;height:24px;border-radius:5px;background:rgba(36,36,36,0.82)"><svg width="24" height="24" style="left:0;top:0"><text x="4" y="9.8" font-size="10.5" font-family="Liberation Sans" fill="#a6a6a6" transform="scale(1.05,0.95)">m</text><text x="15.5" y="20" font-size="10" font-family="Liberation Sans" fill="#a6a6a6">1</text></svg></div>
<div class="a" style="left:292px;top:60px;width:24px;height:24px;border-radius:5px;background:rgba(36,36,36,0.82)"><svg width="24" height="24" style="left:0;top:0"><g fill="none" stroke="#a6a6a6" stroke-width="1.3"><rect x="5" y="10" width="2.6" height="6"/><path d="M6.3 8 v2 M6.3 16 v3"/><rect x="10.5" y="6" width="2.6" height="10"/><path d="M11.8 3.5 v2.5 M11.8 16 v3"/><rect x="16" y="6" width="2.6" height="6"/><path d="M17.3 3.5 v2.5 M17.3 12 v3"/></g></svg></div>
<div class="a" style="left:322px;top:60px;width:81px;height:24px;border-radius:5px;background:#b4461c"><div class="t" style="left:6px;top:5px;font-size:13.5px;line-height:14px;font-weight:bold;color:#cfcfcf">1.32897</div><svg style="left:66px;top:8px" width="9" height="9"><path d="M1 1 L7 7 M7 2.5 V7 H2.5" fill="none" stroke="#d0d0d0" stroke-width="2.2"/></svg></div>
<div class="a" style="left:409px;top:60px;width:81px;height:24px;border-radius:5px;background:#0d6b34"><svg style="left:8px;top:8px" width="9" height="9"><path d="M1 7.5 L7 1.5 M2.5 1.5 H7 V6" fill="none" stroke="#d0d0d0" stroke-width="2.2"/></svg><div class="t" style="left:23px;top:5px;font-size:13.5px;line-height:14px;font-weight:bold;color:#cfcfcf">1.32902</div></div>
<div class="a" style="left:496px;top:60px;width:24px;height:24px;border-radius:5px;background:rgba(36,36,36,0.82)"><svg width="24" height="24" style="left:0;top:0"><g fill="none" stroke="#a6a6a6" stroke-width="1.2"><path d="M4 6 l1.5 1.5 l3 -3 M4 11.5 l1.5 1.5 l3 -3 M4 17 l1.5 1.5 l3 -3"/><path d="M11 6.5 h8 M11 12 h8 M11 17.5 h8" stroke-width="1.6"/></g></svg></div>
<div class="a" style="left:526px;top:60px;width:24px;height:24px;border-radius:5px;background:rgba(36,36,36,0.82)"><svg width="24" height="24" style="left:0;top:0"><circle cx="12" cy="11.9" r="7.9" fill="#a6a6a6"/><path d="M15.5 7.2 Q13 5.8 12.3 9 L10.2 19.5 M8.3 12 H13.6" fill="none" stroke="#222" stroke-width="1.4"/></svg></div>
<div class="a" style="left:556px;top:60px;width:24px;height:24px;border-radius:5px;background:rgba(36,36,36,0.82)"><svg width="24" height="24" style="left:0;top:0"><path d="M5.2 14.5 L12.5 6 Q15 4.4 17.5 5.5 Q20.5 8 20 13 L18.5 19.5 Q14 20.8 11 19.5 Q6.5 18 5.2 16 Z" fill="#a6a6a6"/><path d="M14.3 7.6 L17.8 8 L16.6 14.8 Z" fill="#1e1e1e"/><path d="M16.5 15.5 L16 19.5" stroke="#1e1e1e" stroke-width="0.8"/></svg></div>
<div class="a" style="left:586px;top:60px;width:24px;height:24px;border-radius:5px;background:rgba(36,36,36,0.82)"><svg width="24" height="24" style="left:0;top:0"><path d="M6 10.2 A6 6 0 0 1 18 10.2 Z" fill="#a6a6a6"/><path d="M3.9 11.3 H13 L9.3 19.9 H3.9 Z" fill="#a6a6a6"/><path d="M14.2 11.3 L20 19.9 H10.6 Z" fill="#a6a6a6"/></svg></div>
<div class="a" style="left:821px;top:54px;width:794px;height:404px;background:#000"></div>
<svg class="a" style="left:0;top:0" width="1669" height="756" shape-rendering="crispEdges"><rect x="823" y="54" width="1" height="383" fill="#201f25"/><rect x="855" y="54" width="1" height="383" fill="#201f25"/><rect x="887" y="54" width="1" height="383" fill="#201f25"/><rect x="919" y="54" width="1" height="383" fill="#201f25"/><rect x="951" y="54" width="1" height="383" fill="#201f25"/><rect x="983" y="54" width="1" height="383" fill="#201f25"/><rect x="1015" y="54" width="1" height="383" fill="#201f25"/><rect x="1047" y="54" width="1" height="383" fill="#201f25"/><rect x="1079" y="54" width="1" height="383" fill="#201f25"/><rect x="1111" y="54" width="1" height="383" fill="#201f25"/><rect x="1143" y="54" width="1" height="383" fill="#201f25"/><rect x="1175" y="54" width="1" height="383" fill="#201f25"/><rect x="1207" y="54" width="1" height="383" fill="#201f25"/><rect x="1239" y="54" width="1" height="383" fill="#201f25"/><rect x="1271" y="54" width="1" height="383" fill="#201f25"/><rect x="1303" y="54" width="1" height="383" fill="#201f25"/><rect x="1335" y="54" width="1" height="383" fill="#201f25"/><rect x="1367" y="54" width="1" height="383" fill="#201f25"/><rect x="1399" y="54" width="1" height="383" fill="#201f25"/><rect x="1431" y="54" width="1" height="383" fill="#201f25"/><rect x="1463" y="54" width="1" height="383" fill="#201f25"/><rect x="1495" y="54" width="1" height="383" fill="#201f25"/><rect x="1527" y="54" width="1" height="383" fill="#201f25"/><rect x="821" y="68" width="737" height="1" fill="#201f25"/><rect x="821" y="100" width="737" height="1" fill="#201f25"/><rect x="821" y="131" width="737" height="1" fill="#201f25"/><rect x="821" y="163" width="737" height="1" fill="#201f25"/><rect x="821" y="195" width="737" height="1" fill="#201f25"/><rect x="821" y="226" width="737" height="1" fill="#201f25"/><rect x="821" y="258" width="737" height="1" fill="#201f25"/><rect x="821" y="289" width="737" height="1" fill="#201f25"/><rect x="821" y="321" width="737" height="1" fill="#201f25"/><rect x="821" y="353" width="737" height="1" fill="#201f25"/><rect x="821" y="384" width="737" height="1" fill="#201f25"/><rect x="821" y="416" width="737" height="1" fill="#201f25"/><rect x="1558" y="54" width="1" height="384" fill="#c8c8c8"/><rect x="821" y="437" width="737" height="1" fill="#c8c8c8"/><rect x="1558" y="68" width="3" height="1" fill="#c8c8c8"/><rect x="1558" y="100" width="3" height="1" fill="#c8c8c8"/><rect x="1558" y="131" width="3" height="1" fill="#c8c8c8"/><rect x="1558" y="163" width="3" height="1" fill="#c8c8c8"/><rect x="1558" y="195" width="3" height="1" fill="#c8c8c8"/><rect x="1558" y="226" width="3" height="1" fill="#c8c8c8"/><rect x="1558" y="258" width="3" height="1" fill="#c8c8c8"/><rect x="1558" y="289" width="3" height="1" fill="#c8c8c8"/><rect x="1558" y="321" width="3" height="1" fill="#c8c8c8"/><rect x="1558" y="353" width="3" height="1" fill="#c8c8c8"/><rect x="1558" y="384" width="3" height="1" fill="#c8c8c8"/><rect x="1558" y="416" width="3" height="1" fill="#c8c8c8"/><rect x="919" y="437" width="1" height="4" fill="#c8c8c8"/><rect x="983" y="437" width="1" height="4" fill="#c8c8c8"/><rect x="1047" y="437" width="1" height="4" fill="#c8c8c8"/><rect x="1111" y="437" width="1" height="4" fill="#c8c8c8"/><rect x="1175" y="437" width="1" height="4" fill="#c8c8c8"/><rect x="1239" y="437" width="1" height="4" fill="#c8c8c8"/><rect x="1303" y="437" width="1" height="4" fill="#c8c8c8"/><rect x="1367" y="437" width="1" height="4" fill="#c8c8c8"/><rect x="1431" y="437" width="1" height="4" fill="#c8c8c8"/><rect x="1495" y="437" width="1" height="4" fill="#c8c8c8"/><rect x="823" y="210" width="1" height="30" fill="#00ff00"/>
<rect x="822" y="210" width="3" height="21" fill="#00ff00"/>
<rect x="823" y="211" width="1" height="19" fill="#000"/>
<rect x="827" y="183" width="1" height="32" fill="#00ff00"/>
<rect x="826" y="200" width="3" height="14" fill="#00ff00"/>
<rect x="827" y="201" width="1" height="12" fill="#e8ffe0"/>
<rect x="831" y="177" width="1" height="34" fill="#00ff00"/>
<rect x="830" y="188" width="3" height="23" fill="#00ff00"/>
<rect x="831" y="189" width="1" height="21" fill="#000"/>
<rect x="835" y="184" width="1" height="14" fill="#00ff00"/>
<rect x="834" y="185" width="3" height="7" fill="#00ff00"/>
<rect x="835" y="186" width="1" height="5" fill="#e8ffe0"/>
<rect x="839" y="160" width="1" height="38" fill="#00ff00"/>
<rect x="838" y="160" width="3" height="38" fill="#00ff00"/>
<rect x="839" y="161" width="1" height="36" fill="#000"/>
<rect x="843" y="162" width="1" height="12" fill="#00ff00"/>
<rect x="842" y="162" width="3" height="11" fill="#00ff00"/>
<rect x="843" y="163" width="1" height="9" fill="#e8ffe0"/>
<rect x="847" y="166" width="1" height="25" fill="#00ff00"/>
<rect x="846" y="174" width="3" height="5" fill="#00ff00"/>
<rect x="847" y="175" width="1" height="3" fill="#e8ffe0"/>
<rect x="851" y="158" width="1" height="23" fill="#00ff00"/>
<rect x="850" y="162" width="3" height="19" fill="#00ff00"/>
<rect x="851" y="163" width="1" height="17" fill="#000"/>
<rect x="855" y="161" width="1" height="12" fill="#00ff00"/>
<rect x="854" y="163" width="3" height="6" fill="#00ff00"/>
<rect x="855" y="164" width="1" height="4" fill="#e8ffe0"/>
<rect x="859" y="117" width="1" height="48" fill="#00ff00"/>
<rect x="858" y="131" width="3" height="34" fill="#00ff00"/>
<rect x="859" y="132" width="1" height="32" fill="#000"/>
<rect x="863" y="105" width="1" height="44" fill="#00ff00"/>
<rect x="862" y="129" width="3" height="19" fill="#00ff00"/>
<rect x="863" y="130" width="1" height="17" fill="#e8ffe0"/>
<rect x="867" y="140" width="1" height="11" fill="#00ff00"/>
<rect x="866" y="140" width="3" height="11" fill="#00ff00"/>
<rect x="867" y="141" width="1" height="9" fill="#000"/>
<rect x="871" y="114" width="1" height="17" fill="#00ff00"/>
<rect x="870" y="117" width="3" height="14" fill="#00ff00"/>
<rect x="871" y="118" width="1" height="12" fill="#000"/>
<rect x="875" y="114" width="1" height="20" fill="#00ff00"/>
<rect x="874" y="116" width="3" height="10" fill="#00ff00"/>
<rect x="875" y="117" width="1" height="8" fill="#e8ffe0"/>
<rect x="879" y="131" width="1" height="22" fill="#00ff00"/>
<rect x="878" y="131" width="3" height="11" fill="#00ff00"/>
<rect x="879" y="132" width="1" height="9" fill="#e8ffe0"/>
<rect x="883" y="138" width="1" height="14" fill="#00ff00"/>
<rect x="882" y="144" width="3" height="1" fill="#00ff00"/>
<rect x="887" y="144" width="1" height="10" fill="#00ff00"/>
<rect x="886" y="148" width="3" height="6" fill="#00ff00"/>
<rect x="887" y="149" width="1" height="4" fill="#e8ffe0"/>
<rect x="891" y="150" width="1" height="24" fill="#00ff00"/>
<rect x="890" y="150" width="3" height="23" fill="#00ff00"/>
<rect x="891" y="151" width="1" height="21" fill="#e8ffe0"/>
<rect x="895" y="173" width="1" height="29" fill="#00ff00"/>
<rect x="894" y="174" width="3" height="22" fill="#00ff00"/>
<rect x="895" y="175" width="1" height="20" fill="#e8ffe0"/>
<rect x="899" y="183" width="1" height="28" fill="#00ff00"/>
<rect x="898" y="192" width="3" height="19" fill="#00ff00"/>
<rect x="899" y="193" width="1" height="17" fill="#e8ffe0"/>
<rect x="903" y="200" width="1" height="26" fill="#00ff00"/>
<rect x="902" y="201" width="3" height="10" fill="#00ff00"/>
<rect x="903" y="202" width="1" height="8" fill="#000"/>
<rect x="907" y="201" width="1" height="11" fill="#00ff00"/>
<rect x="906" y="201" width="3" height="11" fill="#00ff00"/>
<rect x="907" y="202" width="1" height="9" fill="#e8ffe0"/>
<rect x="911" y="215" width="1" height="15" fill="#00ff00"/>
<rect x="910" y="216" width="3" height="5" fill="#00ff00"/>
<rect x="911" y="217" width="1" height="3" fill="#e8ffe0"/>
<rect x="915" y="205" width="1" height="25" fill="#00ff00"/>
<rect x="914" y="216" width="3" height="14" fill="#00ff00"/>
<rect x="915" y="217" width="1" height="12" fill="#e8ffe0"/>
<rect x="919" y="226" width="1" height="17" fill="#00ff00"/>
<rect x="918" y="226" width="3" height="6" fill="#00ff00"/>
<rect x="919" y="227" width="1" height="4" fill="#e8ffe0"/>
<rect x="923" y="224" width="1" height="9" fill="#00ff00"/>
<rect x="922" y="229" width="3" height="4" fill="#00ff00"/>
<rect x="923" y="230" width="1" height="2" fill="#e8ffe0"/>
<rect x="927" y="214" width="1" height="15" fill="#00ff00"/>
<rect x="926" y="216" width="3" height="13" fill="#00ff00"/>
<rect x="927" y="217" width="1" height="11" fill="#000"/>
<rect x="931" y="210" width="1" height="17" fill="#00ff00"/>
<rect x="930" y="210" width="3" height="2" fill="#00ff00"/>
<rect x="935" y="201" width="1" height="7" fill="#00ff00"/>
<rect x="934" y="201" width="3" height="7" fill="#00ff00"/>
<rect x="935" y="202" width="1" height="5" fill="#000"/>
<rect x="939" y="200" width="1" height="31" fill="#00ff00"/>
<rect x="938" y="201" width="3" height="20" fill="#00ff00"/>
<rect x="939" y="202" width="1" height="18" fill="#e8ffe0"/>
<rect x="943" y="215" width="1" height="19" fill="#00ff00"/>
<rect x="942" y="216" width="3" height="17" fill="#00ff00"/>
<rect x="943" y="217" width="1" height="15" fill="#e8ffe0"/>
<rect x="947" y="216" width="1" height="19" fill="#00ff00"/>
<rect x="946" y="224" width="3" height="7" fill="#00ff00"/>
<rect x="947" y="225" width="1" height="5" fill="#e8ffe0"/>
<rect x="951" y="231" width="1" height="6" fill="#00ff00"/>
<rect x="950" y="233" width="3" height="2" fill="#00ff00"/>
<rect x="955" y="237" width="1" height="14" fill="#00ff00"/>
<rect x="954" y="237" width="3" height="7" fill="#00ff00"/>
<rect x="955" y="238" width="1" height="5" fill="#e8ffe0"/>
<rect x="959" y="244" width="1" height="6" fill="#00ff00"/>
<rect x="958" y="247" width="3" height="1" fill="#00ff00"/>
<rect x="963" y="235" width="1" height="26" fill="#00ff00"/>
<rect x="962" y="249" width="3" height="12" fill="#00ff00"/>
<rect x="963" y="250" width="1" height="10" fill="#e8ffe0"/>
<rect x="967" y="257" width="1" height="20" fill="#00ff00"/>
<rect x="966" y="257" width="3" height="17" fill="#00ff00"/>
<rect x="967" y="258" width="1" height="15" fill="#e8ffe0"/>
<rect x="971" y="267" width="1" height="9" fill="#00ff00"/>
<rect x="970" y="273" width="3" height="3" fill="#00ff00"/>
<rect x="971" y="274" width="1" height="1" fill="#000"/>
<rect x="975" y="276" width="1" height="5" fill="#00ff00"/>
<rect x="974" y="276" width="3" height="1" fill="#00ff00"/>
<rect x="979" y="268" width="1" height="10" fill="#00ff00"/>
<rect x="978" y="275" width="3" height="3" fill="#00ff00"/>
<rect x="979" y="276" width="1" height="1" fill="#000"/>
<rect x="983" y="269" width="1" height="5" fill="#00ff00"/>
<rect x="982" y="269" width="3" height="2" fill="#00ff00"/>
<rect x="987" y="233" width="1" height="34" fill="#00ff00"/>
<rect x="986" y="238" width="3" height="29" fill="#00ff00"/>
<rect x="987" y="239" width="1" height="27" fill="#000"/>
<rect x="991" y="223" width="1" height="18" fill="#00ff00"/>
<rect x="990" y="225" width="3" height="15" fill="#00ff00"/>
<rect x="991" y="226" width="1" height="13" fill="#000"/>
<rect x="995" y="186" width="1" height="36" fill="#00ff00"/>
<rect x="994" y="187" width="3" height="35" fill="#00ff00"/>
<rect x="995" y="188" width="1" height="33" fill="#000"/>
<rect x="999" y="159" width="1" height="46" fill="#00ff00"/>
<rect x="998" y="171" width="3" height="21" fill="#00ff00"/>
<rect x="999" y="172" width="1" height="19" fill="#000"/>
<rect x="1003" y="158" width="1" height="40" fill="#00ff00"/>
<rect x="1002" y="173" width="3" height="5" fill="#00ff00"/>
<rect x="1003" y="174" width="1" height="3" fill="#e8ffe0"/>
<rect x="1007" y="164" width="1" height="22" fill="#00ff00"/>
<rect x="1006" y="181" width="3" height="5" fill="#00ff00"/>
<rect x="1007" y="182" width="1" height="3" fill="#e8ffe0"/>
<rect x="1011" y="180" width="1" height="25" fill="#00ff00"/>
<rect x="1010" y="188" width="3" height="6" fill="#00ff00"/>
<rect x="1011" y="189" width="1" height="4" fill="#e8ffe0"/>
<rect x="1015" y="183" width="1" height="22" fill="#00ff00"/>
<rect x="1014" y="191" width="3" height="6" fill="#00ff00"/>
<rect x="1015" y="192" width="1" height="4" fill="#000"/>
<rect x="1019" y="188" width="1" height="14" fill="#00ff00"/>
<rect x="1018" y="188" width="3" height="3" fill="#00ff00"/>
<rect x="1019" y="189" width="1" height="1" fill="#e8ffe0"/>
<rect x="1023" y="170" width="1" height="27" fill="#00ff00"/>
<rect x="1022" y="171" width="3" height="22" fill="#00ff00"/>
<rect x="1023" y="172" width="1" height="20" fill="#000"/>
<rect x="1027" y="167" width="1" height="11" fill="#00ff00"/>
<rect x="1026" y="169" width="3" height="9" fill="#00ff00"/>
<rect x="1027" y="170" width="1" height="7" fill="#e8ffe0"/>
<rect x="1031" y="174" width="1" height="24" fill="#00ff00"/>
<rect x="1030" y="181" width="3" height="17" fill="#00ff00"/>
<rect x="1031" y="182" width="1" height="15" fill="#e8ffe0"/>
<rect x="1035" y="191" width="1" height="11" fill="#00ff00"/>
<rect x="1034" y="197" width="3" height="2" fill="#00ff00"/>
<rect x="1039" y="186" width="1" height="21" fill="#00ff00"/>
<rect x="1038" y="187" width="3" height="11" fill="#00ff00"/>
<rect x="1039" y="188" width="1" height="9" fill="#000"/>
<rect x="1043" y="178" width="1" height="21" fill="#00ff00"/>
<rect x="1042" y="178" width="3" height="14" fill="#00ff00"/>
<rect x="1043" y="179" width="1" height="12" fill="#000"/>
<rect x="1047" y="155" width="1" height="28" fill="#00ff00"/>
<rect x="1046" y="172" width="3" height="10" fill="#00ff00"/>
<rect x="1047" y="173" width="1" height="8" fill="#000"/>
<rect x="1051" y="171" width="1" height="11" fill="#00ff00"/>
<rect x="1050" y="172" width="3" height="8" fill="#00ff00"/>
<rect x="1051" y="173" width="1" height="6" fill="#e8ffe0"/>
<rect x="1055" y="180" width="1" height="41" fill="#00ff00"/>
<rect x="1054" y="181" width="3" height="31" fill="#00ff00"/>
<rect x="1055" y="182" width="1" height="29" fill="#e8ffe0"/>
<rect x="1059" y="207" width="1" height="41" fill="#00ff00"/>
<rect x="1058" y="208" width="3" height="12" fill="#00ff00"/>
<rect x="1059" y="209" width="1" height="10" fill="#e8ffe0"/>
<rect x="1063" y="194" width="1" height="34" fill="#00ff00"/>
<rect x="1062" y="215" width="3" height="5" fill="#00ff00"/>
<rect x="1063" y="216" width="1" height="3" fill="#000"/>
<rect x="1067" y="182" width="1" height="34" fill="#00ff00"/>
<rect x="1066" y="185" width="3" height="31" fill="#00ff00"/>
<rect x="1067" y="186" width="1" height="29" fill="#000"/>
<rect x="1071" y="187" width="1" height="15" fill="#00ff00"/>
<rect x="1070" y="188" width="3" height="8" fill="#00ff00"/>
<rect x="1071" y="189" width="1" height="6" fill="#e8ffe0"/>
<rect x="1075" y="177" width="1" height="40" fill="#00ff00"/>
<rect x="1074" y="198" width="3" height="12" fill="#00ff00"/>
<rect x="1075" y="199" width="1" height="10" fill="#e8ffe0"/>
<rect x="1079" y="209" width="1" height="10" fill="#00ff00"/>
<rect x="1078" y="209" width="3" height="4" fill="#00ff00"/>
<rect x="1079" y="210" width="1" height="2" fill="#e8ffe0"/>
<rect x="1083" y="201" width="1" height="42" fill="#00ff00"/>
<rect x="1082" y="216" width="3" height="26" fill="#00ff00"/>
<rect x="1083" y="217" width="1" height="24" fill="#e8ffe0"/>
<rect x="1087" y="239" width="1" height="10" fill="#00ff00"/>
<rect x="1086" y="239" width="3" height="6" fill="#00ff00"/>
<rect x="1087" y="240" width="1" height="4" fill="#e8ffe0"/>
<rect x="1091" y="219" width="1" height="26" fill="#00ff00"/>
<rect x="1090" y="222" width="3" height="22" fill="#00ff00"/>
<rect x="1091" y="223" width="1" height="20" fill="#000"/>
<rect x="1095" y="213" width="1" height="9" fill="#00ff00"/>
<rect x="1094" y="216" width="3" height="2" fill="#00ff00"/>
<rect x="1099" y="217" width="1" height="14" fill="#00ff00"/>
<rect x="1098" y="220" width="3" height="2" fill="#00ff00"/>
<rect x="1103" y="178" width="1" height="43" fill="#00ff00"/>
<rect x="1102" y="179" width="3" height="41" fill="#00ff00"/>
<rect x="1103" y="180" width="1" height="39" fill="#000"/>
<rect x="1107" y="153" width="1" height="35" fill="#00ff00"/>
<rect x="1106" y="158" width="3" height="23" fill="#00ff00"/>
<rect x="1107" y="159" width="1" height="21" fill="#000"/>
<rect x="1111" y="106" width="1" height="48" fill="#00ff00"/>
<rect x="1110" y="117" width="3" height="30" fill="#00ff00"/>
<rect x="1111" y="118" width="1" height="28" fill="#000"/>
<rect x="1115" y="103" width="1" height="43" fill="#00ff00"/>
<rect x="1114" y="114" width="3" height="24" fill="#00ff00"/>
<rect x="1115" y="115" width="1" height="22" fill="#e8ffe0"/>
<rect x="1119" y="103" width="1" height="38" fill="#00ff00"/>
<rect x="1118" y="131" width="3" height="4" fill="#00ff00"/>
<rect x="1119" y="132" width="1" height="2" fill="#000"/>
<rect x="1123" y="130" width="1" height="20" fill="#00ff00"/>
<rect x="1122" y="131" width="3" height="5" fill="#00ff00"/>
<rect x="1123" y="132" width="1" height="3" fill="#000"/>
<rect x="1127" y="134" width="1" height="51" fill="#00ff00"/>
<rect x="1126" y="134" width="3" height="49" fill="#00ff00"/>
<rect x="1127" y="135" width="1" height="47" fill="#e8ffe0"/>
<rect x="1131" y="185" width="1" height="17" fill="#00ff00"/>
<rect x="1130" y="186" width="3" height="15" fill="#00ff00"/>
<rect x="1131" y="187" width="1" height="13" fill="#e8ffe0"/>
<rect x="1135" y="191" width="1" height="15" fill="#00ff00"/>
<rect x="1134" y="193" width="3" height="12" fill="#00ff00"/>
<rect x="1135" y="194" width="1" height="10" fill="#000"/>
<rect x="1139" y="180" width="1" height="37" fill="#00ff00"/>
<rect x="1138" y="191" width="3" height="6" fill="#00ff00"/>
<rect x="1139" y="192" width="1" height="4" fill="#000"/>
<rect x="1143" y="176" width="1" height="18" fill="#00ff00"/>
<rect x="1142" y="186" width="3" height="1" fill="#00ff00"/>
<rect x="1147" y="183" width="1" height="51" fill="#00ff00"/>
<rect x="1146" y="183" width="3" height="46" fill="#00ff00"/>
<rect x="1147" y="184" width="1" height="44" fill="#e8ffe0"/>
<rect x="1151" y="220" width="1" height="33" fill="#00ff00"/>
<rect x="1150" y="232" width="3" height="20" fill="#00ff00"/>
<rect x="1151" y="233" width="1" height="18" fill="#e8ffe0"/>
<rect x="1155" y="247" width="1" height="25" fill="#00ff00"/>
<rect x="1154" y="249" width="3" height="5" fill="#00ff00"/>
<rect x="1155" y="250" width="1" height="3" fill="#000"/>
<rect x="1159" y="248" width="1" height="9" fill="#00ff00"/>
<rect x="1158" y="252" width="3" height="1" fill="#00ff00"/>
<rect x="1163" y="249" width="1" height="46" fill="#00ff00"/>
<rect x="1162" y="249" width="3" height="32" fill="#00ff00"/>
<rect x="1163" y="250" width="1" height="30" fill="#e8ffe0"/>
<rect x="1167" y="268" width="1" height="20" fill="#00ff00"/>
<rect x="1166" y="268" width="3" height="19" fill="#00ff00"/>
<rect x="1167" y="269" width="1" height="17" fill="#e8ffe0"/>
<rect x="1171" y="282" width="1" height="32" fill="#00ff00"/>
<rect x="1170" y="283" width="3" height="27" fill="#00ff00"/>
<rect x="1171" y="284" width="1" height="25" fill="#e8ffe0"/>
<rect x="1175" y="309" width="1" height="54" fill="#00ff00"/>
<rect x="1174" y="309" width="3" height="37" fill="#00ff00"/>
<rect x="1175" y="310" width="1" height="35" fill="#e8ffe0"/>
<rect x="1179" y="314" width="1" height="34" fill="#00ff00"/>
<rect x="1178" y="343" width="3" height="5" fill="#00ff00"/>
<rect x="1179" y="344" width="1" height="3" fill="#e8ffe0"/>
<rect x="1183" y="329" width="1" height="42" fill="#00ff00"/>
<rect x="1182" y="336" width="3" height="32" fill="#00ff00"/>
<rect x="1183" y="337" width="1" height="30" fill="#e8ffe0"/>
<rect x="1187" y="313" width="1" height="49" fill="#00ff00"/>
<rect x="1186" y="313" width="3" height="49" fill="#00ff00"/>
<rect x="1187" y="314" width="1" height="47" fill="#000"/>
<rect x="1191" y="310" width="1" height="22" fill="#00ff00"/>
<rect x="1190" y="316" width="3" height="9" fill="#00ff00"/>
<rect x="1191" y="317" width="1" height="7" fill="#e8ffe0"/>
<rect x="1195" y="316" width="1" height="10" fill="#00ff00"/>
<rect x="1194" y="324" width="3" height="1" fill="#00ff00"/>
<rect x="1199" y="325" width="1" height="23" fill="#00ff00"/>
<rect x="1198" y="325" width="3" height="21" fill="#00ff00"/>
<rect x="1199" y="326" width="1" height="19" fill="#e8ffe0"/>
<rect x="1203" y="325" width="1" height="27" fill="#00ff00"/>
<rect x="1202" y="325" width="3" height="22" fill="#00ff00"/>
<rect x="1203" y="326" width="1" height="20" fill="#000"/>
<rect x="1207" y="316" width="1" height="9" fill="#00ff00"/>
<rect x="1206" y="323" width="3" height="1" fill="#00ff00"/>
<rect x="1211" y="325" width="1" height="22" fill="#00ff00"/>
<rect x="1210" y="326" width="3" height="18" fill="#00ff00"/>
<rect x="1211" y="327" width="1" height="16" fill="#e8ffe0"/>
<rect x="1215" y="315" width="1" height="29" fill="#00ff00"/>
<rect x="1214" y="330" width="3" height="10" fill="#00ff00"/>
<rect x="1215" y="331" width="1" height="8" fill="#000"/>
<rect x="1219" y="319" width="1" height="17" fill="#00ff00"/>
<rect x="1218" y="324" width="3" height="11" fill="#00ff00"/>
<rect x="1219" y="325" width="1" height="9" fill="#e8ffe0"/>
<rect x="1223" y="334" width="1" height="4" fill="#00ff00"/>
<rect x="1222" y="334" width="3" height="4" fill="#00ff00"/>
<rect x="1223" y="335" width="1" height="2" fill="#000"/>
<rect x="1227" y="330" width="1" height="27" fill="#00ff00"/>
<rect x="1226" y="336" width="3" height="20" fill="#00ff00"/>
<rect x="1227" y="337" width="1" height="18" fill="#e8ffe0"/>
<rect x="1231" y="353" width="1" height="44" fill="#00ff00"/>
<rect x="1230" y="354" width="3" height="33" fill="#00ff00"/>
<rect x="1231" y="355" width="1" height="31" fill="#e8ffe0"/>
<rect x="1235" y="353" width="1" height="34" fill="#00ff00"/>
<rect x="1234" y="358" width="3" height="23" fill="#00ff00"/>
<rect x="1235" y="359" width="1" height="21" fill="#000"/>
<rect x="1239" y="330" width="1" height="28" fill="#00ff00"/>
<rect x="1238" y="340" width="3" height="17" fill="#00ff00"/>
<rect x="1239" y="341" width="1" height="15" fill="#000"/>
<rect x="1243" y="312" width="1" height="28" fill="#00ff00"/>
<rect x="1242" y="315" width="3" height="18" fill="#00ff00"/>
<rect x="1243" y="316" width="1" height="16" fill="#000"/>
<rect x="1247" y="302" width="1" height="32" fill="#00ff00"/>
<rect x="1246" y="309" width="3" height="1" fill="#00ff00"/>
<rect x="1251" y="300" width="1" height="39" fill="#00ff00"/>
<rect x="1250" y="310" width="3" height="28" fill="#00ff00"/>
<rect x="1251" y="311" width="1" height="26" fill="#e8ffe0"/>
<rect x="1255" y="181" width="1" height="153" fill="#00ff00"/>
<rect x="1254" y="192" width="3" height="141" fill="#00ff00"/>
<rect x="1255" y="193" width="1" height="139" fill="#000"/>
<rect x="1259" y="196" width="1" height="51" fill="#00ff00"/>
<rect x="1258" y="197" width="3" height="43" fill="#00ff00"/>
<rect x="1259" y="198" width="1" height="41" fill="#e8ffe0"/>
<rect x="1263" y="209" width="1" height="60" fill="#00ff00"/>
<rect x="1262" y="237" width="3" height="19" fill="#00ff00"/>
<rect x="1263" y="238" width="1" height="17" fill="#e8ffe0"/>
<rect x="1267" y="248" width="1" height="14" fill="#00ff00"/>
<rect x="1266" y="254" width="3" height="1" fill="#00ff00"/>
<rect x="1271" y="249" width="1" height="34" fill="#00ff00"/>
<rect x="1270" y="258" width="3" height="24" fill="#00ff00"/>
<rect x="1271" y="259" width="1" height="22" fill="#e8ffe0"/>
<rect x="1275" y="263" width="1" height="21" fill="#00ff00"/>
<rect x="1274" y="282" width="3" height="1" fill="#00ff00"/>
<rect x="1279" y="273" width="1" height="51" fill="#00ff00"/>
<rect x="1278" y="280" width="3" height="22" fill="#00ff00"/>
<rect x="1279" y="281" width="1" height="20" fill="#e8ffe0"/>
<rect x="1283" y="286" width="1" height="48" fill="#00ff00"/>
<rect x="1282" y="286" width="3" height="19" fill="#00ff00"/>
<rect x="1283" y="287" width="1" height="17" fill="#000"/>
<rect x="1287" y="281" width="1" height="13" fill="#00ff00"/>
<rect x="1286" y="283" width="3" height="9" fill="#00ff00"/>
<rect x="1287" y="284" width="1" height="7" fill="#e8ffe0"/>
<rect x="1291" y="292" width="1" height="35" fill="#00ff00"/>
<rect x="1290" y="295" width="3" height="15" fill="#00ff00"/>
<rect x="1291" y="296" width="1" height="13" fill="#e8ffe0"/>
<rect x="1295" y="259" width="1" height="49" fill="#00ff00"/>
<rect x="1294" y="273" width="3" height="34" fill="#00ff00"/>
<rect x="1295" y="274" width="1" height="32" fill="#000"/>
<rect x="1299" y="249" width="1" height="25" fill="#00ff00"/>
<rect x="1298" y="259" width="3" height="13" fill="#00ff00"/>
<rect x="1299" y="260" width="1" height="11" fill="#000"/>
<rect x="1303" y="260" width="1" height="26" fill="#00ff00"/>
<rect x="1302" y="263" width="3" height="16" fill="#00ff00"/>
<rect x="1303" y="264" width="1" height="14" fill="#e8ffe0"/>
<rect x="1307" y="242" width="1" height="39" fill="#00ff00"/>
<rect x="1306" y="248" width="3" height="32" fill="#00ff00"/>
<rect x="1307" y="249" width="1" height="30" fill="#000"/>
<rect x="1311" y="245" width="1" height="29" fill="#00ff00"/>
<rect x="1310" y="249" width="3" height="16" fill="#00ff00"/>
<rect x="1311" y="250" width="1" height="14" fill="#e8ffe0"/>
<rect x="1315" y="258" width="1" height="10" fill="#00ff00"/>
<rect x="1314" y="258" width="3" height="4" fill="#00ff00"/>
<rect x="1315" y="259" width="1" height="2" fill="#000"/>
<rect x="1319" y="254" width="1" height="8" fill="#00ff00"/>
<rect x="1318" y="255" width="3" height="6" fill="#00ff00"/>
<rect x="1319" y="256" width="1" height="4" fill="#000"/>
<rect x="1323" y="250" width="1" height="9" fill="#00ff00"/>
<rect x="1322" y="250" width="3" height="8" fill="#00ff00"/>
<rect x="1323" y="251" width="1" height="6" fill="#000"/>
<rect x="1327" y="254" width="1" height="77" fill="#00ff00"/>
<rect x="1326" y="255" width="3" height="75" fill="#00ff00"/>
<rect x="1327" y="256" width="1" height="73" fill="#e8ffe0"/>
<rect x="1331" y="316" width="1" height="17" fill="#00ff00"/>
<rect x="1330" y="319" width="3" height="10" fill="#00ff00"/>
<rect x="1331" y="320" width="1" height="8" fill="#000"/>
<rect x="1335" y="307" width="1" height="18" fill="#00ff00"/>
<rect x="1334" y="319" width="3" height="2" fill="#00ff00"/>
<rect x="1339" y="316" width="1" height="17" fill="#00ff00"/>
<rect x="1338" y="319" width="3" height="8" fill="#00ff00"/>
<rect x="1339" y="320" width="1" height="6" fill="#e8ffe0"/>
<rect x="1343" y="324" width="1" height="40" fill="#00ff00"/>
<rect x="1342" y="324" width="3" height="39" fill="#00ff00"/>
<rect x="1343" y="325" width="1" height="37" fill="#e8ffe0"/>
<rect x="1347" y="351" width="1" height="63" fill="#00ff00"/>
<rect x="1346" y="358" width="3" height="46" fill="#00ff00"/>
<rect x="1347" y="359" width="1" height="44" fill="#e8ffe0"/>
<rect x="1351" y="389" width="1" height="27" fill="#00ff00"/>
<rect x="1350" y="392" width="3" height="10" fill="#00ff00"/>
<rect x="1351" y="393" width="1" height="8" fill="#000"/>
<rect x="1355" y="351" width="1" height="48" fill="#00ff00"/>
<rect x="1354" y="352" width="3" height="27" fill="#00ff00"/>
<rect x="1355" y="353" width="1" height="25" fill="#000"/>
<rect x="1359" y="343" width="1" height="43" fill="#00ff00"/>
<rect x="1358" y="358" width="3" height="26" fill="#00ff00"/>
<rect x="1359" y="359" width="1" height="24" fill="#e8ffe0"/>
<rect x="1363" y="361" width="1" height="38" fill="#00ff00"/>
<rect x="1362" y="378" width="3" height="19" fill="#00ff00"/>
<rect x="1363" y="379" width="1" height="17" fill="#e8ffe0"/>
<rect x="1367" y="353" width="1" height="54" fill="#00ff00"/>
<rect x="1366" y="358" width="3" height="42" fill="#00ff00"/>
<rect x="1367" y="359" width="1" height="40" fill="#000"/>
<rect x="1371" y="351" width="1" height="26" fill="#00ff00"/>
<rect x="1370" y="356" width="3" height="21" fill="#00ff00"/>
<rect x="1371" y="357" width="1" height="19" fill="#e8ffe0"/>
<rect x="1375" y="357" width="1" height="17" fill="#00ff00"/>
<rect x="1374" y="365" width="3" height="8" fill="#00ff00"/>
<rect x="1375" y="366" width="1" height="6" fill="#000"/>
<rect x="1379" y="353" width="1" height="17" fill="#00ff00"/>
<rect x="1378" y="363" width="3" height="4" fill="#00ff00"/>
<rect x="1379" y="364" width="1" height="2" fill="#e8ffe0"/>
<rect x="1383" y="361" width="1" height="15" fill="#00ff00"/>
<rect x="1382" y="370" width="3" height="1" fill="#00ff00"/>
<rect x="1387" y="361" width="1" height="18" fill="#00ff00"/>
<rect x="1386" y="369" width="3" height="6" fill="#00ff00"/>
<rect x="1387" y="370" width="1" height="4" fill="#e8ffe0"/>
<rect x="1391" y="351" width="1" height="16" fill="#00ff00"/>
<rect x="1390" y="352" width="3" height="14" fill="#00ff00"/>
<rect x="1391" y="353" width="1" height="12" fill="#000"/>
<rect x="1395" y="333" width="1" height="20" fill="#00ff00"/>
<rect x="1394" y="348" width="3" height="1" fill="#00ff00"/>
<rect x="1399" y="343" width="1" height="26" fill="#00ff00"/>
<rect x="1398" y="348" width="3" height="4" fill="#00ff00"/>
<rect x="1399" y="349" width="1" height="2" fill="#000"/>
<rect x="1403" y="343" width="1" height="9" fill="#00ff00"/>
<rect x="1402" y="343" width="3" height="3" fill="#00ff00"/>
<rect x="1403" y="344" width="1" height="1" fill="#000"/>
<rect x="1407" y="340" width="1" height="10" fill="#00ff00"/>
<rect x="1406" y="344" width="3" height="2" fill="#00ff00"/>
<rect x="1411" y="343" width="1" height="24" fill="#00ff00"/>
<rect x="1410" y="352" width="3" height="14" fill="#00ff00"/>
<rect x="1411" y="353" width="1" height="12" fill="#e8ffe0"/>
<rect x="1415" y="351" width="1" height="20" fill="#00ff00"/>
<rect x="1414" y="354" width="3" height="15" fill="#00ff00"/>
<rect x="1415" y="355" width="1" height="13" fill="#000"/>
<rect x="1419" y="352" width="1" height="5" fill="#00ff00"/>
<rect x="1418" y="356" width="3" height="1" fill="#00ff00"/>
<rect x="1423" y="329" width="1" height="28" fill="#00ff00"/>
<rect x="1422" y="340" width="3" height="17" fill="#00ff00"/>
<rect x="1423" y="341" width="1" height="15" fill="#000"/>
<rect x="1427" y="307" width="1" height="37" fill="#00ff00"/>
<rect x="1426" y="314" width="3" height="25" fill="#00ff00"/>
<rect x="1427" y="315" width="1" height="23" fill="#000"/>
<rect x="1431" y="307" width="1" height="15" fill="#00ff00"/>
<rect x="1430" y="310" width="3" height="6" fill="#00ff00"/>
<rect x="1431" y="311" width="1" height="4" fill="#000"/>
<rect x="1435" y="294" width="1" height="16" fill="#00ff00"/>
<rect x="1434" y="295" width="3" height="12" fill="#00ff00"/>
<rect x="1435" y="296" width="1" height="10" fill="#000"/>
<rect x="1439" y="280" width="1" height="11" fill="#00ff00"/>
<rect x="1438" y="286" width="3" height="4" fill="#00ff00"/>
<rect x="1439" y="287" width="1" height="2" fill="#000"/>
<rect x="1443" y="261" width="1" height="30" fill="#00ff00"/>
<rect x="1442" y="266" width="3" height="23" fill="#00ff00"/>
<rect x="1443" y="267" width="1" height="21" fill="#000"/>
<rect x="1447" y="263" width="1" height="15" fill="#00ff00"/>
<rect x="1446" y="264" width="3" height="8" fill="#00ff00"/>
<rect x="1447" y="265" width="1" height="6" fill="#e8ffe0"/>
<rect x="1451" y="223" width="1" height="33" fill="#00ff00"/>
<rect x="1450" y="224" width="3" height="21" fill="#00ff00"/>
<rect x="1451" y="225" width="1" height="19" fill="#000"/>
<rect x="1455" y="225" width="1" height="53" fill="#00ff00"/>
<rect x="1454" y="226" width="3" height="51" fill="#00ff00"/>
<rect x="1455" y="227" width="1" height="49" fill="#e8ffe0"/>
<rect x="1459" y="266" width="1" height="15" fill="#00ff00"/>
<rect x="1458" y="268" width="3" height="12" fill="#00ff00"/>
<rect x="1459" y="269" width="1" height="10" fill="#000"/>
<rect x="1463" y="225" width="1" height="48" fill="#00ff00"/>
<rect x="1462" y="232" width="3" height="36" fill="#00ff00"/>
<rect x="1463" y="233" width="1" height="34" fill="#000"/>
<rect x="1467" y="224" width="1" height="19" fill="#00ff00"/>
<rect x="1466" y="230" width="3" height="10" fill="#00ff00"/>
<rect x="1467" y="231" width="1" height="8" fill="#e8ffe0"/>
<rect x="1471" y="234" width="1" height="8" fill="#00ff00"/>
<rect x="1470" y="238" width="3" height="2" fill="#00ff00"/>
<rect x="1475" y="233" width="1" height="45" fill="#00ff00"/>
<rect x="1474" y="238" width="3" height="39" fill="#00ff00"/>
<rect x="1475" y="239" width="1" height="37" fill="#e8ffe0"/>
<rect x="1479" y="276" width="1" height="36" fill="#00ff00"/>
<rect x="1478" y="280" width="3" height="15" fill="#00ff00"/>
<rect x="1479" y="281" width="1" height="13" fill="#e8ffe0"/>
<rect x="1483" y="195" width="1" height="96" fill="#00ff00"/>
<rect x="1482" y="196" width="3" height="95" fill="#00ff00"/>
<rect x="1483" y="197" width="1" height="93" fill="#000"/>
<rect x="1487" y="180" width="1" height="31" fill="#00ff00"/>
<rect x="1486" y="192" width="3" height="15" fill="#00ff00"/>
<rect x="1487" y="193" width="1" height="13" fill="#e8ffe0"/>
<rect x="1491" y="192" width="1" height="18" fill="#00ff00"/>
<rect x="1490" y="199" width="3" height="10" fill="#00ff00"/>
<rect x="1491" y="200" width="1" height="8" fill="#000"/>
<rect x="1495" y="194" width="1" height="15" fill="#00ff00"/>
<rect x="1494" y="199" width="3" height="2" fill="#00ff00"/>
<rect x="1499" y="198" width="1" height="13" fill="#00ff00"/>
<rect x="1498" y="200" width="3" height="4" fill="#00ff00"/>
<rect x="1499" y="201" width="1" height="2" fill="#000"/><rect x="821" y="199" width="730" height="1" fill="#1f7acc"/><rect x="821" y="200" width="730" height="1" fill="#ff0000"/><rect x="1544" y="65" width="1" height="65" fill="#c8c8c8"/><rect x="1538" y="65" width="6" height="1" fill="#c8c8c8"/><rect x="1538" y="129" width="6" height="1" fill="#c8c8c8"/></svg>
<div class="t" style="left:1563px;top:64.65px;font-size:12.7px;line-height:12.7px;color:#d4d4d4;">1.54025</div>
<div class="t" style="left:1563px;top:96.65px;font-size:12.7px;line-height:12.7px;color:#d4d4d4;">1.54000</div>
<div class="t" style="left:1563px;top:127.65px;font-size:12.7px;line-height:12.7px;color:#d4d4d4;">1.53975</div>
<div class="t" style="left:1563px;top:159.65px;font-size:12.7px;line-height:12.7px;color:#d4d4d4;">1.53950</div>
<div class="t" style="left:1563px;top:191.65px;font-size:12.7px;line-height:12.7px;color:#d4d4d4;">1.53925</div>
<div class="t" style="left:1563px;top:222.65px;font-size:12.7px;line-height:12.7px;color:#d4d4d4;">1.53900</div>
<div class="t" style="left:1563px;top:254.65px;font-size:12.7px;line-height:12.7px;color:#d4d4d4;">1.53875</div>
<div class="t" style="left:1563px;top:285.65px;font-size:12.7px;line-height:12.7px;color:#d4d4d4;">1.53850</div>
<div class="t" style="left:1563px;top:317.65px;font-size:12.7px;line-height:12.7px;color:#d4d4d4;">1.53825</div>
<div class="t" style="left:1563px;top:349.65px;font-size:12.7px;line-height:12.7px;color:#d4d4d4;">1.53800</div>
<div class="t" style="left:1563px;top:380.65px;font-size:12.7px;line-height:12.7px;color:#d4d4d4;">1.53775</div>
<div class="t" style="left:1563px;top:412.65px;font-size:12.7px;line-height:12.7px;color:#d4d4d4;">1.53750</div>
<div class="t" style="left:824px;top:443.0px;font-size:13px;line-height:13px;color:#d4d4d4;">26 Jul 2013, UTC+4</div>
<div class="t" style="left:984px;top:443.0px;font-size:13px;line-height:13px;color:#d4d4d4;">09:56</div>
<div class="t" style="left:1048px;top:443.0px;font-size:13px;line-height:13px;color:#d4d4d4;">10:12</div>
<div class="t" style="left:1112px;top:443.0px;font-size:13px;line-height:13px;color:#d4d4d4;">10:28</div>
<div class="t" style="left:1176px;top:443.0px;font-size:13px;line-height:13px;color:#d4d4d4;">10:44</div>
<div class="t" style="left:1240px;top:443.0px;font-size:13px;line-height:13px;color:#d4d4d4;">11:00</div>
<div class="t" style="left:1304px;top:443.0px;font-size:13px;line-height:13px;color:#d4d4d4;">11:16</div>
<div class="t" style="left:1368px;top:443.0px;font-size:13px;line-height:13px;color:#d4d4d4;">11:32</div>
<div class="t" style="left:1432px;top:443.0px;font-size:13px;line-height:13px;color:#d4d4d4;">11:48</div>
<div class="t" style="left:1496px;top:443.0px;font-size:13px;line-height:13px;color:#d4d4d4;">12:04</div>
<div class="t" style="left:1506px;top:92px;width:60px;height:14px;text-align:center;font-size:13px;line-height:14px;color:#c4c4c4;transform:rotate(-90deg)">5 pips</div>
<svg class="a" style="left:0;top:0" width="1669" height="756"><polygon points="1551,199 1558,191 1607,191 1609,193 1609,205 1607,207 1558,207" fill="#0a74c6"/></svg><div class="t" style="left:1558px;top:194.25px;font-size:12.5px;line-height:12.5px;color:#ffffff;">1.53921</div>
<svg class="a" style="left:0;top:0" width="1669" height="756"><polygon points="1551,200 1558,192 1607,192 1609,194 1609,206 1607,208 1558,208" fill="#ff0000"/></svg><div class="t" style="left:1558px;top:195.25px;font-size:12.5px;line-height:12.5px;color:#ffffff;">1.53921</div>
<svg class="a" style="left:0;top:0" width="1669" height="756"><path d="M1479.5 428.5 H1493 L1499 421.5 L1505 428.5 H1517.5 Q1518.5 428.5 1518.5 429.5 V441.5 Q1518.5 442.5 1517.5 442.5 H1480.5 Q1479.5 442.5 1479.5 441.5 Z" fill="#000" stroke="#c8c8c8" stroke-width="1"/></svg>
<div class="t" style="left:1483px;top:429.0px;font-size:13px;line-height:13px;color:#d4d4d4;">00:41</div>
<svg class="a" style="left:812px;top:460px" width="809" height="18"><path d="M10.5 8.8 L18 4.8 V12.8 Z" fill="#777"/><rect x="772" y="4" width="15" height="9" rx="4.5" fill="#6e6e6e"/><path d="M799 8.8 L791.8 4.8 V12.8 Z" fill="#777"/></svg>
<div class="a" style="left:1014px;top:60px;width:24px;height:24px;border-radius:5px;background:rgba(36,36,36,0.82)"><svg width="24" height="24" style="left:0;top:0"><g fill="none" stroke="#a6a6a6" stroke-width="2"><circle cx="13.5" cy="9.5" r="5.2"/><path d="M10 13.5 L5 18.5" stroke-width="2.6" stroke-linecap="round"/></g><path d="M13.5 6.5 v6 M10.5 9.5 h6" stroke="#a6a6a6" stroke-width="1.5"/></svg></div>
<div class="a" style="left:1044px;top:60px;width:24px;height:24px;border-radius:5px;background:rgba(36,36,36,0.82)"><svg width="24" height="24" style="left:0;top:0"><g fill="none" stroke="#a6a6a6" stroke-width="1.2"><path d="M4.5 14.5 V4.5 H13"/><path d="M4.5 14.5 H12"/><path d="M6 12 L10 8 L13 11 L19 4"/><path d="M19 7 v6"/></g><polygon points="19.80,15.80 19.70,16.65 18.43,16.97 18.11,17.48 18.37,18.77 17.65,19.22 16.60,18.43 16.00,18.50 15.15,19.50 14.35,19.22 14.32,17.91 13.89,17.48 12.58,17.45 12.30,16.65 13.30,15.80 13.37,15.20 12.58,14.15 13.03,13.43 14.32,13.69 14.83,13.37 15.15,12.10 16.00,12.00 16.60,13.17 17.17,13.37 18.37,12.83 18.97,13.43 18.43,14.63 18.63,15.20" fill="#a6a6a6"/><circle cx="16" cy="15.8" r="1.1" fill="#262626"/></svg></div>
<div class="a" style="left:1074px;top:60px;width:24px;height:24px;border-radius:5px;background:rgba(36,36,36,0.82)"><svg width="24" height="24" style="left:0;top:0"><text x="4" y="9.8" font-size="10.5" font-family="Liberation Sans" fill="#a6a6a6" transform="scale(1.05,0.95)">m</text><text x="15.5" y="20" font-size="10" font-family="Liberation Sans" fill="#a6a6a6">1</text></svg></div>
<div class="a" style="left:1104px;top:60px;width:24px;height:24px;border-radius:5px;background:rgba(36,36,36,0.82)"><svg width="24" height="24" style="left:0;top:0"><g fill="none" stroke="#a6a6a6" stroke-width="1.3"><rect x="5" y="10" width="2.6" height="6"/><path d="M6.3 8 v2 M6.3 16 v3"/><rect x="10.5" y="6" width="2.6" height="10"/><path d="M11.8 3.5 v2.5 M11.8 16 v3"/><rect x="16" y="6" width="2.6" height="6"/><path d="M17.3 3.5 v2.5 M17.3 12 v3"/></g></svg></div>
<div class="a" style="left:1134px;top:60px;width:81px;height:24px;border-radius:5px;background:#0d6b34"><div class="t" style="left:6px;top:5px;font-size:13.5px;line-height:14px;font-weight:bold;color:#cfcfcf">1.53921</div><svg style="left:66px;top:8px" width="9" height="9"><path d="M1 7.5 L7 1.5 M2.5 1.5 H7 V6" fill="none" stroke="#d0d0d0" stroke-width="2.2"/></svg></div>
<div class="a" style="left:1221px;top:60px;width:81px;height:24px;border-radius:5px;background:#0d6b34"><svg style="left:8px;top:8px" width="9" height="9"><path d="M1 7.5 L7 1.5 M2.5 1.5 H7 V6" fill="none" stroke="#d0d0d0" stroke-width="2.2"/></svg><div class="t" style="left:23px;top:5px;font-size:13.5px;line-height:14px;font-weight:bold;color:#cfcfcf">1.53922</div></div>
<div class="a" style="left:1308px;top:60px;width:24px;height:24px;border-radius:5px;background:rgba(36,36,36,0.82)"><svg width="24" height="24" style="left:0;top:0"><g fill="none" stroke="#a6a6a6" stroke-width="1.2"><path d="M4 6 l1.5 1.5 l3 -3 M4 11.5 l1.5 1.5 l3 -3 M4 17 l1.5 1.5 l3 -3"/><path d="M11 6.5 h8 M11 12 h8 M11 17.5 h8" stroke-width="1.6"/></g></svg></div>
<div class="a" style="left:1338px;top:60px;width:24px;height:24px;border-radius:5px;background:rgba(36,36,36,0.82)"><svg width="24" height="24" style="left:0;top:0"><circle cx="12" cy="11.9" r="7.9" fill="#a6a6a6"/><path d="M15.5 7.2 Q13 5.8 12.3 9 L10.2 19.5 M8.3 12 H13.6" fill="none" stroke="#222" stroke-width="1.4"/></svg></div>
<div class="a" style="left:1368px;top:60px;width:24px;height:24px;border-radius:5px;background:rgba(36,36,36,0.82)"><svg width="24" height="24" style="left:0;top:0"><path d="M5.2 14.5 L12.5 6 Q15 4.4 17.5 5.5 Q20.5 8 20 13 L18.5 19.5 Q14 20.8 11 19.5 Q6.5 18 5.2 16 Z" fill="#a6a6a6"/><path d="M14.3 7.6 L17.8 8 L16.6 14.8 Z" fill="#1e1e1e"/><path d="M16.5 15.5 L16 19.5" stroke="#1e1e1e" stroke-width="0.8"/></svg></div>
<div class="a" style="left:1398px;top:60px;width:24px;height:24px;border-radius:5px;background:rgba(36,36,36,0.82)"><svg width="24" height="24" style="left:0;top:0"><path d="M6 10.2 A6 6 0 0 1 18 10.2 Z" fill="#a6a6a6"/><path d="M3.9 11.3 H13 L9.3 19.9 H3.9 Z" fill="#a6a6a6"/><path d="M14.2 11.3 L20 19.9 H10.6 Z" fill="#a6a6a6"/></svg></div>
<svg class="a" style="left:1255px;top:0" width="414" height="26"><g fill="none" stroke="#c4c4c4" stroke-width="1.2" stroke-linejoin="round">
<path d="M12.5 4.5 H24.5 Q25.8 4.5 25.5 6.5 L24 18.5 Q23.8 19.8 22.5 19.8 H11 Q9.5 19.8 10 17.5 L11 16.5 H20.5 L22 6 Q22 4.5 20.5 4.5"/>
<path d="M12.5 4.5 L11.2 16.5"/>
<path d="M14.5 7.5 H21 M14.2 10 H20.7 M14 12.5 H20.4" stroke-width="1.6"/>
<rect x="45.5" y="5.5" width="16" height="13" rx="2"/>
<path d="M62 12 L68.5 7 V17.5 Z"/>
</g>
<text x="50" y="16" font-family="Liberation Sans" font-size="11" fill="#c4c4c4">?</text>
<g fill="none" stroke="#c4c4c4" stroke-width="1.2" stroke-linejoin="round">
<path d="M91 5.5 H100 Q104 5.5 104 9.5 V12 Q104 15.5 100 15.5 H95 L92.5 19 L92 15.5 Q88 15.5 88 12 V9.5 Q88 5.5 91 5.5Z"/>
<path d="M122.5 18.5 V13 Q122.5 7.5 129 7.5 Q134 7 136 11 Q139.5 11.5 139.5 15"/><path d="M122.5 18.5 H130"/>
<path d="M126.5 13 Q129 10 132.5 13"/>
</g>
<polygon points="139.10,18.50 139.00,19.41 137.70,19.80 137.35,20.37 137.56,21.71 136.78,22.19 135.67,21.42 135.00,21.50 134.09,22.50 133.22,22.19 133.13,20.85 132.65,20.37 131.31,20.28 131.00,19.41 132.00,18.50 132.08,17.83 131.31,16.72 131.79,15.94 133.13,16.15 133.70,15.80 134.09,14.50 135.00,14.40 135.67,15.58 136.30,15.80 137.56,15.29 138.21,15.94 137.70,17.20 137.92,17.83" fill="#c4c4c4"/><circle cx="135" cy="18.5" r="1.3" fill="#3b3b3b"/>
<g fill="none" stroke="#c4c4c4" stroke-width="1.2" stroke-linejoin="round">
<path d="M162 14 V5.5 Q163.2 4 164.4 5.5 V11 M164.4 11 Q166 10 167 11.5 Q168.5 11 169.5 12.5 V16 M162 14 L160 12.5 Q158.5 12.5 159 14 L162 19.5 H166"/>
<path d="M197 14 V5.5 Q198.2 4 199.4 5.5 V11 M199.4 11 Q201 10 202 11.5 Q203.5 11 204.5 12.5 Q206 12.2 206.5 14 V17.5 L205 20 H198 L193.5 14.5 Q193 13 194.8 13 L197 15"/>
</g>
<polygon points="175.10,18.50 175.00,19.41 173.70,19.80 173.35,20.37 173.56,21.71 172.78,22.19 171.67,21.42 171.00,21.50 170.09,22.50 169.22,22.19 169.13,20.85 168.65,20.37 167.31,20.28 167.00,19.41 168.00,18.50 168.08,17.83 167.31,16.72 167.79,15.94 169.13,16.15 169.70,15.80 170.09,14.50 171.00,14.40 171.67,15.58 172.30,15.80 173.56,15.29 174.21,15.94 173.70,17.20 173.92,17.83" fill="#c4c4c4"/><circle cx="171" cy="18.5" r="1.3" fill="#3b3b3b"/>
<path d="M208.5 14 L211 16.5 L216 10.5" fill="none" stroke="#3cb53c" stroke-width="2"/>
<g fill="none" stroke="#c4c4c4" stroke-width="1.2">
<rect x="232.5" y="9.5" width="15" height="9.5" rx="2"/>
<path d="M235 9.5 Q236 7 240 7 H247 L247.5 5"/>
</g>
<g fill="#c4c4c4"><rect x="235" y="12" width="1.5" height="1.2"/><rect x="238" y="12" width="1.5" height="1.2"/><rect x="241" y="12" width="1.5" height="1.2"/><rect x="244" y="12" width="1.5" height="1.2"/><rect x="235" y="14.3" width="1.5" height="1.2"/><rect x="238" y="14.3" width="1.5" height="1.2"/><rect x="241" y="14.3" width="1.5" height="1.2"/><rect x="244" y="14.3" width="1.5" height="1.2"/><rect x="237" y="16.5" width="7" height="1.2"/></g>
<path d="M266.5 10 H270 L275 5.8 V18.6 L270 14.5 H266.5 Z" fill="none" stroke="#c4c4c4" stroke-width="1.2" stroke-linejoin="round"/>
<path d="M278 10.5 V14 M280.5 9 V15.5 M283 7.5 V17" stroke="#3cb53c" stroke-width="1.3"/>
<rect x="304.5" y="5.5" width="20" height="12.5" rx="2" fill="none" stroke="#c4c4c4" stroke-width="1.3"/>
<text x="307.5" y="15.6" font-family="Liberation Sans" font-weight="bold" font-size="9.5" fill="#c4c4c4">RU</text>
<g fill="none" stroke="#c4c4c4" stroke-width="1.3">
<rect x="344.5" y="6.5" width="15.5" height="13" rx="1.5"/><path d="M344.5 16 H360"/>
<rect x="381.5" y="7.5" width="15" height="10" rx="1.5"/>
</g>
<g fill="#c4c4c4"><path d="M380 5.5 h3.5 l-3.5 3.5z M400 5.5 h-3.5 l3.5 3.5z M380 19.5 h3.5 l-3.5 -3.5z M400 19.5 h-3.5 l3.5 -3.5z"/></g>
</svg>
<div class="a" style="left:1629px;top:30px;width:36px;height:466px;background:#555;border-radius:5px"></div>
<svg class="a" style="left:1629px;top:30px" width="36" height="466"><rect x="9" y="6" width="1" height="1" fill="#2a2a2a"/><rect x="9" y="8" width="1" height="1" fill="#2a2a2a"/><rect x="11" y="6" width="1" height="1" fill="#2a2a2a"/><rect x="11" y="8" width="1" height="1" fill="#2a2a2a"/><rect x="13" y="6" width="1" height="1" fill="#2a2a2a"/><rect x="13" y="8" width="1" height="1" fill="#2a2a2a"/><rect x="15" y="6" width="1" height="1" fill="#2a2a2a"/><rect x="15" y="8" width="1" height="1" fill="#2a2a2a"/><rect x="17" y="6" width="1" height="1" fill="#2a2a2a"/><rect x="17" y="8" width="1" height="1" fill="#2a2a2a"/><rect x="19" y="6" width="1" height="1" fill="#2a2a2a"/><rect x="19" y="8" width="1" height="1" fill="#2a2a2a"/><rect x="21" y="6" width="1" height="1" fill="#2a2a2a"/><rect x="21" y="8" width="1" height="1" fill="#2a2a2a"/><rect x="23" y="6" width="1" height="1" fill="#2a2a2a"/><rect x="23" y="8" width="1" height="1" fill="#2a2a2a"/><rect x="25" y="6" width="1" height="1" fill="#2a2a2a"/><rect x="25" y="8" width="1" height="1" fill="#2a2a2a"/><rect x="27" y="6" width="1" height="1" fill="#2a2a2a"/><rect x="27" y="8" width="1" height="1" fill="#2a2a2a"/><g fill="#d2d2d2" shape-rendering="crispEdges"><rect x="10" y="21" width="6" height="5"/><rect x="17" y="21" width="7" height="5"/><rect x="10" y="27" width="6" height="6"/><rect x="17" y="27" width="7" height="6"/></g><rect x="10" y="51" width="14" height="11.5" fill="#d2d2d2"/><rect x="5" y="75" width="24" height="24" rx="4" fill="#2b2b2b"/><g fill="#d2d2d2" shape-rendering="crispEdges"><rect x="10" y="81" width="14" height="5"/><rect x="10" y="87" width="6" height="6"/><rect x="17" y="87" width="7" height="6"/></g><rect x="3" y="106" width="27" height="1" fill="#3c3c3c"/><rect x="5" y="113" width="24" height="24" rx="4" fill="#2b2b2b"/><path d="M13.5 119 V131 L16 128.5 L18 132.5 L19.5 131.8 L17.5 128 H21 Z" fill="#d2d2d2"/><g stroke="#d2d2d2" stroke-width="1.4" fill="none"><path d="M17 148 V153 M17 156 V161.5 M10 154.5 H15.5 M18.5 154.5 H24"/><path d="M17 178 V183 M10 184.5 H15.5"/><rect x="17.2" y="185.2" width="6" height="6"/></g><rect x="3" y="204" width="27" height="1" fill="#3c3c3c"/><g stroke="#d2d2d2" stroke-width="1.3" fill="none"><path d="M24.5 216 L11.5 229"/><path d="M9.4 254.5 L18.8 245.1 M13 260 L13.8 252 M15.9 258 L16.6 249 M18.5 255 L18.9 247 M21 251 L20.8 245 M14.2 260.7 L18.5 256.4 M21.5 253 L24 250.5" stroke-width="1.1"/><path d="M10.5 289.5 L14.8 285.1 M12.6 281.5 L18.5 287.3 M12.6 281.5 L18.5 276.4 M15.5 284.4 L21 278.9 M18.5 287.3 L23.9 281.5" stroke-width="1.2"/></g><text x="20.6" y="261.2" font-family="Liberation Sans" font-weight="bold" font-size="8" fill="#d2d2d2">E</text><path d="M7 230.4 V234.4 H10.6 Z" fill="#d2d2d2"/><rect x="9.8" y="304.90000000000003" width="1.5" height="1.5" fill="#d2d2d2"/><rect x="13.4" y="304.90000000000003" width="1.5" height="1.5" fill="#d2d2d2"/><rect x="17.2" y="304.90000000000003" width="1.5" height="1.5" fill="#d2d2d2"/><rect x="20.900000000000002" y="304.90000000000003" width="1.5" height="1.5" fill="#d2d2d2"/><rect x="24.8" y="304.90000000000003" width="1.5" height="1.5" fill="#d2d2d2"/><rect x="9.8" y="309.8" width="1.5" height="1.5" fill="#d2d2d2"/><rect x="13.4" y="309.8" width="1.5" height="1.5" fill="#d2d2d2"/><rect x="17.2" y="309.8" width="1.5" height="1.5" fill="#d2d2d2"/><rect x="20.900000000000002" y="309.8" width="1.5" height="1.5" fill="#d2d2d2"/><rect x="24.8" y="309.8" width="1.5" height="1.5" fill="#d2d2d2"/><rect x="9.8" y="314.8" width="1.5" height="1.5" fill="#d2d2d2"/><rect x="13.4" y="314.8" width="1.5" height="1.5" fill="#d2d2d2"/><rect x="17.2" y="314.8" width="1.5" height="1.5" fill="#d2d2d2"/><rect x="9.8" y="319.7" width="1.5" height="1.5" fill="#d2d2d2"/><rect x="13.4" y="319.7" width="1.5" height="1.5" fill="#d2d2d2"/><rect x="17.2" y="319.7" width="1.5" height="1.5" fill="#d2d2d2"/><text x="21.5" y="321" font-family="Liberation Sans" font-weight="bold" font-size="8" fill="#d2d2d2">F</text><path d="M7 320 V324 H10.6 Z" fill="#d2d2d2"/><rect x="10.7" y="337.9" width="14.6" height="10.2" fill="none" stroke="#d2d2d2" stroke-width="1.4"/><path d="M7 350 V354 H10.6 Z" fill="#d2d2d2"/><text x="11.5" y="379" font-family="Liberation Serif" font-size="15" fill="#d2d2d2">T</text><rect x="3" y="392" width="27" height="1" fill="#3c3c3c"/><rect x="9" y="403" width="16.5" height="16" fill="#b38ccc" stroke="#cfcfcf" stroke-width="0.8"/><rect x="3" y="430" width="27" height="1" fill="#3c3c3c"/><path d="M9.5 454.5 V448 Q9.5 446.5 11 446.5 H13 L14.5 443.5 H20.5 L22 446.5 H23.5 Q25 446.5 25 448 V454.5 Z" fill="none" stroke="#d2d2d2" stroke-width="1.3"/><circle cx="17.2" cy="450.5" r="3" fill="none" stroke="#d2d2d2" stroke-width="1.3"/></svg>
<div class="a" style="left:3px;top:486px;width:68px;height:32px;background:#555;border-radius:5px 5px 0 0"></div>
<div class="a" style="left:77px;top:486px;width:64px;height:30px;background:#2b2b2b;border-radius:5px 5px 0 0"></div>
<div class="a" style="left:147px;top:486px;width:68px;height:30px;background:#2b2b2b;border-radius:5px 5px 0 0"></div>
<div class="a" style="left:1447px;top:486px;width:92px;height:30px;background:#2b2b2b;border-radius:5px 5px 0 0"></div>
<div class="a" style="left:1545px;top:486px;width:78px;height:30px;background:#2b2b2b;border-radius:5px 5px 0 0"></div>
<div class="a" style="left:3px;top:516px;width:1621px;height:213px;background:#555;border-radius:0 5px 5px 5px"></div>
<div class="a" style="left:9px;top:522px;width:1608px;height:200px;background:#2b2b2b;border-radius:4px"></div>
<div class="t" style="left:9px;top:495.0px;font-size:14px;line-height:14px;color:#f4f4f4;">Позиции</div>
<div class="t" style="left:83px;top:495.0px;font-size:14px;line-height:14px;color:#f4f4f4;">Ордера</div>
<div class="t" style="left:153px;top:495.0px;font-size:14px;line-height:14px;color:#f4f4f4;">История</div>
<div class="t" style="left:1478px;top:495.0px;font-size:14px;line-height:14px;color:#f4f4f4;">Новости</div>
<div class="t" style="left:1457px;top:498px;font-size:11px;line-height:11px;font-weight:bold;font-style:italic;color:#2e9fdc;letter-spacing:0.8px;-webkit-text-stroke:0.5px #2e9fdc">DJ</div>
<svg class="a" style="left:1552px;top:494px" width="18" height="16"><path d="M2 1.5 H15.5 Q16.5 1.5 16.5 2.5 V8.5 Q16.5 9.5 15.5 9.5 H6 L1.5 13.5 L3 9.5 H2 Q1 9.5 1 8.5 V2.5 Q1 1.5 2 1.5Z" fill="#2b2b2b" stroke="#e0e0e0" stroke-width="1.1"/><rect x="3" y="3.5" width="5.5" height="4" fill="#10a020"/><rect x="9.5" y="3.5" width="5" height="4" fill="#ff2020"/></svg>
<div class="t" style="left:1575px;top:495.0px;font-size:14px;line-height:14px;color:#f4f4f4;">Отзыв</div>
<div class="t" style="left:-47px;width:200px;text-align:center;top:529px;font-size:14px;line-height:14px;color:#9c9c9c">ID</div>
<div class="t" style="left:86px;width:200px;text-align:center;top:529px;font-size:14px;line-height:14px;color:#9c9c9c">Label</div>
<div class="t" style="left:270px;width:200px;text-align:center;top:529px;font-size:14px;line-height:14px;color:#9c9c9c">Время (UTC+4)</div>
<div class="t" style="left:451px;width:200px;text-align:center;top:529px;font-size:14px;line-height:14px;color:#9c9c9c">Символ</div>
<div class="t" style="left:548px;width:200px;text-align:center;top:529px;font-size:14px;line-height:14px;color:#9c9c9c">Объем</div>
<div class="t" style="left:626px;width:200px;text-align:center;top:529px;font-size:14px;line-height:14px;color:#9c9c9c">Тип</div>
<div class="t" style="left:727px;width:200px;text-align:center;top:529px;font-size:14px;line-height:14px;color:#9c9c9c">Открытие</div>
<div class="t" style="left:837px;width:200px;text-align:center;top:529px;font-size:14px;line-height:14px;color:#9c9c9c">T/P</div>
<div class="t" style="left:932px;width:200px;text-align:center;top:529px;font-size:14px;line-height:14px;color:#9c9c9c">S/L</div>
<div class="t" style="left:1029px;width:200px;text-align:center;top:529px;font-size:14px;line-height:14px;color:#9c9c9c">Swap</div>
<div class="t" style="left:1126px;width:200px;text-align:center;top:529px;font-size:14px;line-height:14px;color:#9c9c9c">Комиссия</div>
<div class="t" style="left:1222px;width:200px;text-align:center;top:529px;font-size:14px;line-height:14px;color:#9c9c9c">Pips</div>
<div class="t" style="left:1329px;width:200px;text-align:center;top:529px;font-size:14px;line-height:14px;color:#9c9c9c">Net USD</div>
<div class="t" style="left:1465px;width:200px;text-align:center;top:529px;font-size:14px;line-height:14px;color:#9c9c9c">Закрыть</div>
<div class="a" style="left:121px;top:527px;width:1px;height:18px;background:#1a1a1a"></div>
<div class="a" style="left:247px;top:527px;width:1px;height:18px;background:#1a1a1a"></div>
<div class="a" style="left:488px;top:527px;width:1px;height:18px;background:#1a1a1a"></div>
<div class="a" style="left:610px;top:527px;width:1px;height:18px;background:#1a1a1a"></div>
<div class="a" style="left:682px;top:527px;width:1px;height:18px;background:#1a1a1a"></div>
<div class="a" style="left:766px;top:527px;width:1px;height:18px;background:#1a1a1a"></div>
<div class="a" style="left:887px;top:527px;width:1px;height:18px;background:#1a1a1a"></div>
<div class="a" style="left:983px;top:527px;width:1px;height:18px;background:#1a1a1a"></div>
<div class="a" style="left:1078px;top:527px;width:1px;height:18px;background:#1a1a1a"></div>
<div class="a" style="left:1176px;top:527px;width:1px;height:18px;background:#1a1a1a"></div>
<div class="a" style="left:1272px;top:527px;width:1px;height:18px;background:#1a1a1a"></div>
<div class="a" style="left:1368px;top:527px;width:1px;height:18px;background:#1a1a1a"></div>
<div class="t" style="left:15px;top:551.0px;font-size:14px;line-height:14px;color:#f4f4f4;letter-spacing:0.1px">Баланс: 0.00</div>
<div class="t" style="left:111px;top:551.0px;font-size:14px;line-height:14px;color:#f4f4f4;letter-spacing:0.1px">Средства: 0.00</div>
<div class="t" style="left:222px;top:551.0px;font-size:14px;line-height:14px;color:#f4f4f4;letter-spacing:0.1px">Margin: 0.00</div>
<div class="t" style="left:313px;top:551.0px;font-size:14px;line-height:14px;color:#f4f4f4;letter-spacing:0.1px">Свободная Margin: 0.00</div>
<div class="t" style="left:481px;top:551.0px;font-size:14px;line-height:14px;color:#f4f4f4;letter-spacing:0.1px">Уровень Margin: Не доступно</div>
<div class="t" style="left:685px;top:551.0px;font-size:14px;line-height:14px;color:#f4f4f4;letter-spacing:0.1px">Нереализованная прибыль/убыток: 0.00</div>
<div class="a" style="left:66px;top:527px;width:14px;height:18px;border:1px solid #9c9c9c;border-radius:3px"></div>
<div class="t" style="left:70px;top:531.5px;font-size:10px;line-height:10px;color:#9c9c9c;">1</div>
<svg class="a" style="left:83px;top:531px" width="10" height="9"><path d="M1 7.5 L4.8 1.5 L8.6 7.5Z" fill="#9c9c9c"/></svg>
<div class="a" style="left:9px;top:740px;width:6px;height:6px;border-radius:3px;background:#0a8a0a"></div>
<div class="t" style="left:22px;top:736.0px;font-size:14px;line-height:14px;color:#9a9a9a;letter-spacing:0.12px">Торговые сессии:</div>
<div class="t" style="left:146px;top:736.0px;font-size:14px;line-height:14px;color:#9a9a9a;letter-spacing:0.15px">Токио, Сингапур, Франкфурт, Лондон</div>
<div class="t" style="left:881px;top:736.0px;font-size:14px;line-height:14px;color:#9a9a9a;letter-spacing:0.06px">Серверное время: (UTC+3) 26/07/2013 11:05:18</div>
<div class="a" style="left:1204px;top:737px;width:1px;height:12px;background:#9a9a9a"></div>
<div class="t" style="left:1212px;top:736.0px;font-size:14px;line-height:14px;color:#9a9a9a;letter-spacing:0.2px">User Time Offset:</div>
<div class="a" style="left:1328px;top:730px;width:74px;height:24px;background:#2b2b2b;border-radius:3px"></div>
<div class="t" style="left:1332px;top:736.0px;font-size:14px;line-height:14px;color:#f4f4f4;">UTC+4</div>
<svg class="a" style="left:1387px;top:738px" width="10" height="8"><path d="M1.5 1.5 H8.5 L5 7Z" fill="#9a9a9a"/></svg>
<div class="a" style="left:1409px;top:734px;width:1px;height:14px;background:#9a9a9a"></div>
<div class="t" style="left:1417px;top:736.0px;font-size:14px;line-height:14px;color:#9a9a9a;">User Time:</div>
<div class="t" style="left:1490px;top:736.0px;font-size:14px;line-height:14px;color:#9a9a9a;letter-spacing:0.15px">26/07/2013 12:05:18</div>
</body></html>
